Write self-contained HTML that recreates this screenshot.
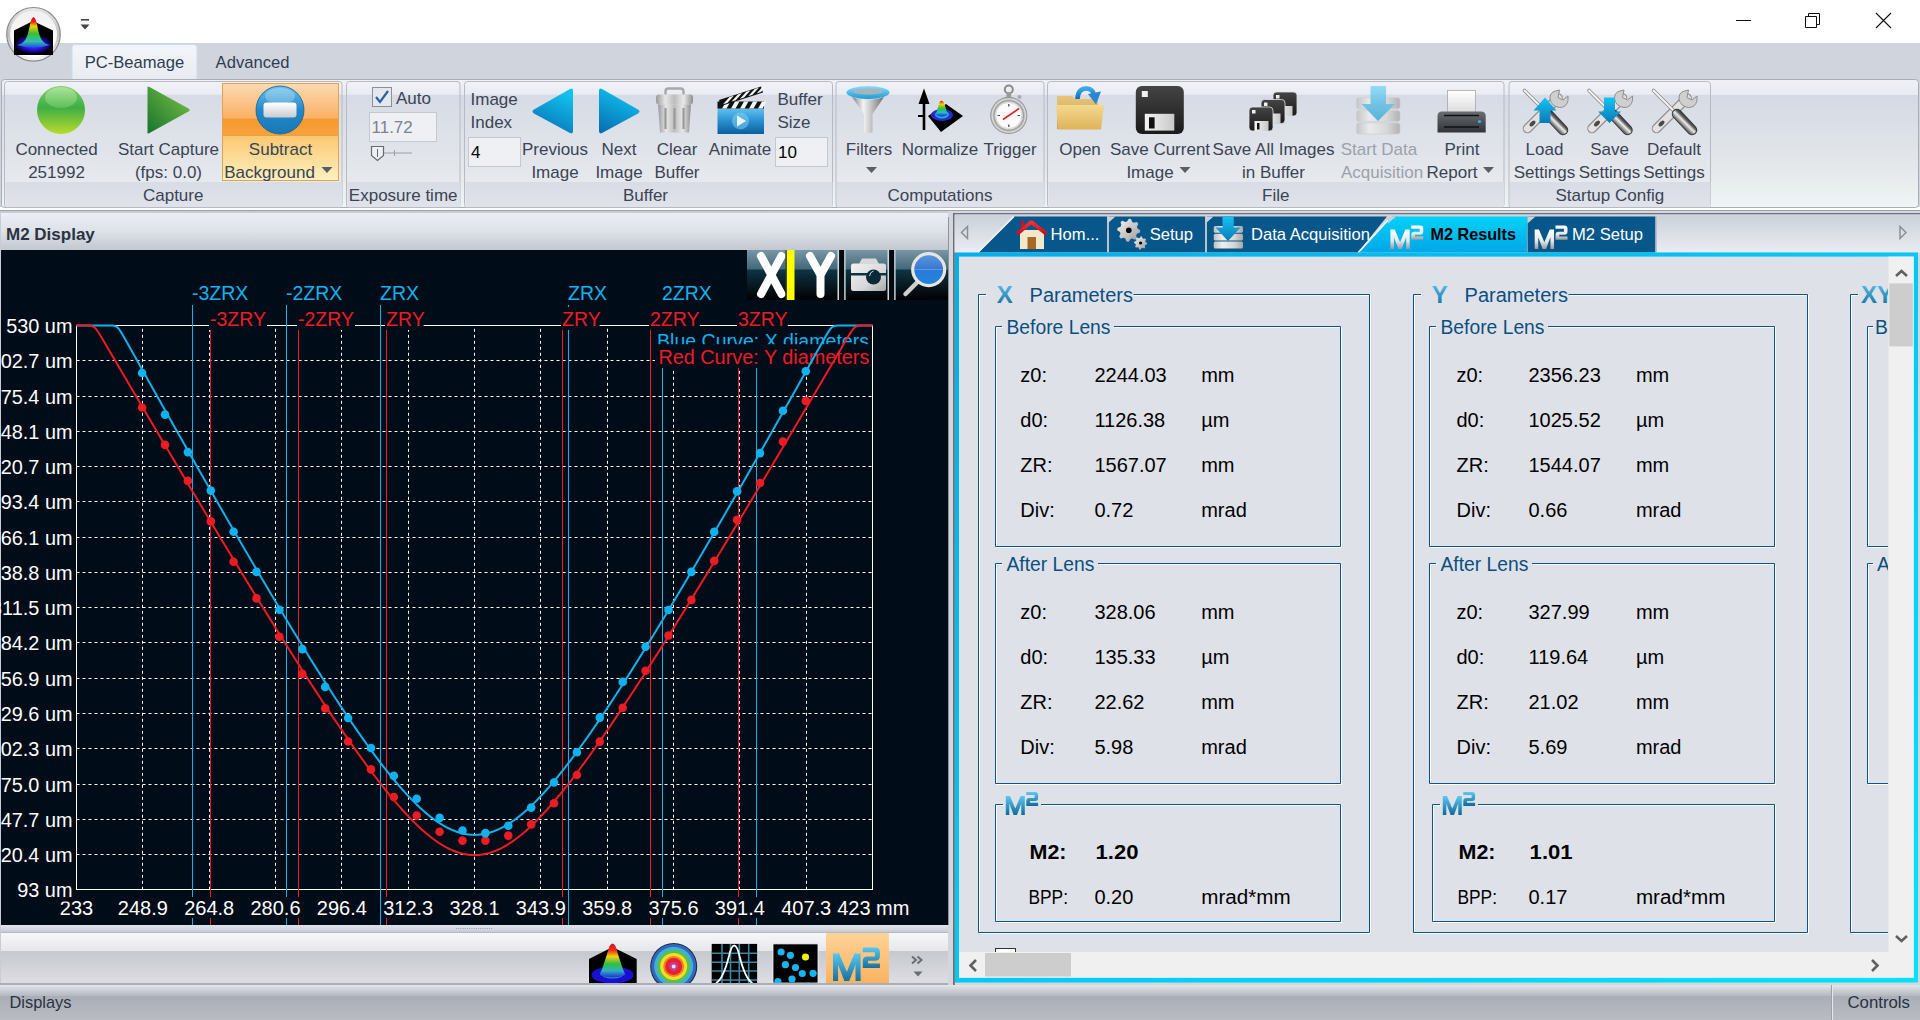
<!DOCTYPE html>
<html><head><meta charset="utf-8"><title>PC-Beamage M2</title>
<style>
html,body{margin:0;padding:0;width:1920px;height:1020px;overflow:hidden;background:#d4d8e0;}
body{position:relative;font-family:"Liberation Sans", sans-serif;}
svg{display:block;font-family:"Liberation Sans", sans-serif;}
</style></head><body>
<svg width="0" height="0" style="position:absolute"><defs><linearGradient id="gTabSel" x1="0" y1="0" x2="0" y2="1"><stop offset="0" stop-color="#f3f6f9"/><stop offset="1" stop-color="#e8ebf1"/></linearGradient><linearGradient id="gRib" x1="0" y1="0" x2="0" y2="1"><stop offset="0" stop-color="#eff1f6"/><stop offset="0.12" stop-color="#e8ebf1"/><stop offset="0.125" stop-color="#d4d9e3"/><stop offset="0.4" stop-color="#dce0e8"/><stop offset="0.72" stop-color="#e5e9eb"/><stop offset="1" stop-color="#eff5f6"/></linearGradient><linearGradient id="gGroup" x1="0" y1="0" x2="0" y2="1"><stop offset="0" stop-color="#f0f2f6"/><stop offset="0.1" stop-color="#e9ecf2"/><stop offset="0.11" stop-color="#d6dbe5"/><stop offset="0.45" stop-color="#dee2e9"/><stop offset="0.8" stop-color="#e6e9ed"/><stop offset="1" stop-color="#eceff1"/></linearGradient><linearGradient id="gGLab" x1="0" y1="0" x2="0" y2="1"><stop offset="0" stop-color="#d8dce5"/><stop offset="1" stop-color="#e0e3ea"/></linearGradient><linearGradient id="gSubUp" x1="0" y1="0" x2="0" y2="1"><stop offset="0" stop-color="#fdd9b2"/><stop offset="0.66" stop-color="#fab164"/><stop offset="0.685" stop-color="#f7982f"/><stop offset="1" stop-color="#f8a33e"/></linearGradient><linearGradient id="gSubLo" x1="0" y1="0" x2="0" y2="1"><stop offset="0" stop-color="#fbc771"/><stop offset="1" stop-color="#fff0bf"/></linearGradient><linearGradient id="gHdr" x1="0" y1="0" x2="0" y2="1"><stop offset="0" stop-color="#ebeef5"/><stop offset="0.5" stop-color="#dde1e8"/><stop offset="1" stop-color="#c3c7cf"/></linearGradient><linearGradient id="gTabStrip" x1="0" y1="0" x2="0" y2="1"><stop offset="0" stop-color="#ccd0d9"/><stop offset="1" stop-color="#e9ecf2"/></linearGradient><linearGradient id="gCyanFrame" x1="0" y1="0" x2="1" y2="1"><stop offset="0" stop-color="#00b0e8"/><stop offset="1" stop-color="#00e2ff"/></linearGradient><linearGradient id="gTabSelC" x1="0" y1="0" x2="0" y2="1"><stop offset="0" stop-color="#00d2f8"/><stop offset="1" stop-color="#00a6e6"/></linearGradient><linearGradient id="gBotBar" x1="0" y1="0" x2="0" y2="1"><stop offset="0" stop-color="#f6f7f9"/><stop offset="0.36" stop-color="#e5e7ea"/><stop offset="0.37" stop-color="#c6c9ce"/><stop offset="1" stop-color="#dcdee2"/></linearGradient><linearGradient id="gStatus" x1="0" y1="0" x2="0" y2="1"><stop offset="0" stop-color="#e3e6ea"/><stop offset="0.3" stop-color="#b5b9c1"/><stop offset="0.33" stop-color="#aaaeb6"/><stop offset="1" stop-color="#b9bcc3"/></linearGradient><linearGradient id="gSplit" x1="0" y1="0" x2="0" y2="1"><stop offset="0" stop-color="#e0e4ed"/><stop offset="0.55" stop-color="#d2d6de"/><stop offset="0.85" stop-color="#c6cad2"/><stop offset="1" stop-color="#a9adb5"/></linearGradient><linearGradient id="gXBar" x1="0" y1="0" x2="0" y2="1"><stop offset="0" stop-color="#86a3b1"/><stop offset="0.42" stop-color="#3e6374"/><stop offset="0.44" stop-color="#0a2d3c"/><stop offset="1" stop-color="#000000"/></linearGradient><linearGradient id="gLetter" x1="0" y1="0" x2="0" y2="1"><stop offset="0" stop-color="#5ec9f2"/><stop offset="1" stop-color="#0f6a98"/></linearGradient><linearGradient id="gBlueTri" x1="0" y1="0" x2="0" y2="1"><stop offset="0" stop-color="#12c0f0"/><stop offset="1" stop-color="#0b6eb0"/></linearGradient><linearGradient id="gGreenTri" x1="1" y1="0" x2="0" y2="1"><stop offset="0" stop-color="#86c84a"/><stop offset="1" stop-color="#1a7a32"/></linearGradient><radialGradient id="gGreenBall" cx="0.5" cy="0.35" r="0.65"><stop offset="0" stop-color="#8fdc73"/><stop offset="0.55" stop-color="#4cb847"/><stop offset="1" stop-color="#b4dc30"/></radialGradient><radialGradient id="gBlueBall" cx="0.5" cy="0.4" r="0.6"><stop offset="0" stop-color="#7cc8ee"/><stop offset="0.6" stop-color="#2a8ccc"/><stop offset="1" stop-color="#0f5e96"/></radialGradient><linearGradient id="iGreenBall" x1="0" y1="0" x2="0" y2="1"><stop offset="0" stop-color="#7fd06a"/><stop offset="0.45" stop-color="#3fae45"/><stop offset="1" stop-color="#b8dc2a"/></linearGradient><linearGradient id="iGreenHi" x1="0" y1="0" x2="0" y2="1"><stop offset="0" stop-color="#b4e6a4"/><stop offset="1" stop-color="#62c25a"/></linearGradient><linearGradient id="iGreenTri" x1="1" y1="0" x2="0" y2="1"><stop offset="0" stop-color="#7ec444"/><stop offset="1" stop-color="#16732f"/></linearGradient><linearGradient id="iBlueBall" x1="0" y1="0" x2="0" y2="1"><stop offset="0" stop-color="#6cc2ee"/><stop offset="0.5" stop-color="#2288c8"/><stop offset="1" stop-color="#1a78b8"/></linearGradient><linearGradient id="iBar" x1="0" y1="0" x2="0" y2="1"><stop offset="0" stop-color="#ffffff"/><stop offset="1" stop-color="#c9ccd0"/></linearGradient><linearGradient id="iTri" x1="0.6" y1="0" x2="0.2" y2="1"><stop offset="0" stop-color="#12c2f2"/><stop offset="1" stop-color="#0670b2"/></linearGradient><linearGradient id="iSilver" x1="0" y1="0" x2="1" y2="0"><stop offset="0" stop-color="#9a9a9a"/><stop offset="0.25" stop-color="#e6e6e6"/><stop offset="0.5" stop-color="#bdbdbd"/><stop offset="0.75" stop-color="#e8e8e8"/><stop offset="1" stop-color="#8e8e8e"/></linearGradient><linearGradient id="iClapBody" x1="0" y1="0" x2="0" y2="1"><stop offset="0" stop-color="#63c3ee"/><stop offset="0.5" stop-color="#2a8fcf"/><stop offset="1" stop-color="#0b5f9e"/></linearGradient><linearGradient id="iCyanRing" x1="0" y1="0" x2="0" y2="1"><stop offset="0" stop-color="#8fdcf8"/><stop offset="1" stop-color="#1a9ad6"/></linearGradient><linearGradient id="iCone" x1="0" y1="0" x2="1" y2="0"><stop offset="0" stop-color="#7a7a7a"/><stop offset="0.35" stop-color="#f4f4f4"/><stop offset="0.6" stop-color="#c4c4c4"/><stop offset="1" stop-color="#6e6e6e"/></linearGradient><radialGradient id="iOrbBase" cx="0.5" cy="0.5" r="0.5"><stop offset="0" stop-color="#3a60ff"/><stop offset="0.55" stop-color="#2a10e0"/><stop offset="1" stop-color="#000010"/></radialGradient><linearGradient id="iOrbRing" x1="0" y1="0" x2="0" y2="1"><stop offset="0" stop-color="#e8e8e8"/><stop offset="0.5" stop-color="#bdbdbd"/><stop offset="1" stop-color="#f8f8f8"/></linearGradient><linearGradient id="iOrbIn" x1="0" y1="0" x2="0" y2="1"><stop offset="0" stop-color="#f0f0f0"/><stop offset="1" stop-color="#ffffff"/></linearGradient><linearGradient id="iRainbow2" x1="0" y1="0" x2="0" y2="1"><stop offset="0" stop-color="#d00020"/><stop offset="0.15" stop-color="#f02010"/><stop offset="0.3" stop-color="#f0d000"/><stop offset="0.55" stop-color="#38c038"/><stop offset="0.8" stop-color="#30c0b0"/><stop offset="1" stop-color="#2050e0"/></linearGradient><linearGradient id="iRainbow" x1="0" y1="0" x2="0" y2="1"><stop offset="0" stop-color="#e01010"/><stop offset="0.22" stop-color="#f0d000"/><stop offset="0.5" stop-color="#30c040"/><stop offset="0.75" stop-color="#20c0d0"/><stop offset="1" stop-color="#2020e0"/></linearGradient><radialGradient id="iWatch" cx="0.5" cy="0.5" r="0.5"><stop offset="0" stop-color="#ffffff"/><stop offset="0.7" stop-color="#f4f4f4"/><stop offset="0.8" stop-color="#9a9a9a"/><stop offset="0.9" stop-color="#e0e0e0"/><stop offset="1" stop-color="#7a7a7a"/></radialGradient><linearGradient id="iFolder" x1="0" y1="0" x2="0" y2="1"><stop offset="0" stop-color="#f3d98f"/><stop offset="1" stop-color="#dfb35a"/></linearGradient><linearGradient id="iFolderBack" x1="0" y1="0" x2="0" y2="1"><stop offset="0" stop-color="#e6c57a"/><stop offset="1" stop-color="#c99c45"/></linearGradient><linearGradient id="iArrowBlue" x1="0" y1="0" x2="0" y2="1"><stop offset="0" stop-color="#3aa8e8"/><stop offset="1" stop-color="#0f6cb8"/></linearGradient><linearGradient id="iFloppy" x1="0" y1="0" x2="0" y2="1"><stop offset="0" stop-color="#444"/><stop offset="1" stop-color="#1a1a1a"/></linearGradient><linearGradient id="iLabel" x1="0" y1="0" x2="1" y2="0"><stop offset="0" stop-color="#f4f4f4"/><stop offset="1" stop-color="#c8c8c8"/></linearGradient><linearGradient id="iDisc" x1="0" y1="0" x2="1" y2="0"><stop offset="0" stop-color="#c0c0c0"/><stop offset="0.3" stop-color="#eeeeee"/><stop offset="0.7" stop-color="#d6d6d6"/><stop offset="1" stop-color="#a8a8a8"/></linearGradient><linearGradient id="iArrowLight" x1="0" y1="0" x2="0" y2="1"><stop offset="0" stop-color="#7dd6f6"/><stop offset="1" stop-color="#3aa6d6"/></linearGradient><linearGradient id="iPrinter" x1="0" y1="0" x2="0" y2="1"><stop offset="0" stop-color="#6a6e72"/><stop offset="1" stop-color="#303438"/></linearGradient><linearGradient id="iPaper" x1="0" y1="0" x2="0" y2="1"><stop offset="0" stop-color="#ffffff"/><stop offset="1" stop-color="#dcdcdc"/></linearGradient><linearGradient id="iCyanArrow" x1="0" y1="0" x2="0" y2="1"><stop offset="0" stop-color="#14c4f4"/><stop offset="1" stop-color="#0a7ab6"/></linearGradient><linearGradient id="iDarkHandle" x1="29.8" y1="38.7" x2="38.2" y2="30.3" gradientUnits="userSpaceOnUse"><stop offset="0" stop-color="#2a2a2a"/><stop offset="0.3" stop-color="#a0a0a0"/><stop offset="0.5" stop-color="#eeeeee"/><stop offset="0.72" stop-color="#606060"/><stop offset="1" stop-color="#1e1e1e"/></linearGradient><linearGradient id="tbBg" x1="0" y1="0" x2="0" y2="1"><stop offset="0" stop-color="#7896a6"/><stop offset="0.38" stop-color="#436878"/><stop offset="0.4" stop-color="#0e3444"/><stop offset="1" stop-color="#000000"/></linearGradient><linearGradient id="tbCam" x1="0" y1="0" x2="1" y2="1"><stop offset="0" stop-color="#f2f2f2"/><stop offset="0.6" stop-color="#d8d8d8"/><stop offset="1" stop-color="#a8a8a8"/></linearGradient><linearGradient id="tbGlass" x1="0" y1="0" x2="0" y2="1"><stop offset="0" stop-color="#5a9ae0"/><stop offset="0.48" stop-color="#3a78d0"/><stop offset="0.52" stop-color="#2a7ad8"/><stop offset="1" stop-color="#1a88e0"/></linearGradient><linearGradient id="m2Blue" x1="0" y1="0" x2="0" y2="1"><stop offset="0" stop-color="#55c8f2"/><stop offset="1" stop-color="#16709e"/></linearGradient><linearGradient id="m2Silver" x1="0" y1="0" x2="0" y2="1"><stop offset="0" stop-color="#ffffff"/><stop offset="0.6" stop-color="#e6e6e6"/><stop offset="1" stop-color="#9a9a9a"/></linearGradient><linearGradient id="m2Orange" x1="0" y1="0" x2="0" y2="1"><stop offset="0" stop-color="#fdd398"/><stop offset="1" stop-color="#fbb261"/></linearGradient><linearGradient id="houseRoof" x1="0" y1="0" x2="0" y2="1"><stop offset="0" stop-color="#ff3030"/><stop offset="1" stop-color="#c80c1c"/></linearGradient><linearGradient id="gearG" x1="0" y1="0" x2="1" y2="1"><stop offset="0" stop-color="#f4f4f4"/><stop offset="1" stop-color="#9a9a9a"/></linearGradient><linearGradient id="conePeak" x1="0" y1="0" x2="0" y2="1"><stop offset="0" stop-color="#d01040"/><stop offset="0.2" stop-color="#f03010"/><stop offset="0.38" stop-color="#f0d010"/><stop offset="0.6" stop-color="#30c040"/><stop offset="0.8" stop-color="#30b0c0"/><stop offset="1" stop-color="#2030d0"/></linearGradient></defs></svg>
<div style="position:absolute;left:0px;top:0px;width:1920px;height:43px;overflow:hidden"><svg width="1920" height="43" viewBox="0 0 1920 43"><rect x="0" y="0" width="1920" height="43" fill="#fff"/><rect x="81" y="19" width="8" height="1.6" fill="#444"/><path d="M80.5 24.5h9l-4.5 5z" fill="#444"/><path d="M1736 20.5h15" stroke="#111" stroke-width="1"/><path d="M1805.5 16.5h11v11h-11z M1808.5 16.5v-3h11v11h-3" fill="none" stroke="#111" stroke-width="1"/><path d="M1876 13l15 15M1891 13l-15 15" stroke="#111" stroke-width="1.1"/></svg></div>
<div style="position:absolute;left:0px;top:43px;width:1920px;height:167px;overflow:hidden"><svg width="1920" height="167" viewBox="0 43 1920 167"><rect x="0" y="43" width="1920" height="167" fill="#d0d4dd"/><path d="M72 79V47.5q0-3 3-3h119q3 0 3 3V79" fill="url(#gTabSel)" stroke="#c8dcea" stroke-width="1"/><text x="134.5" y="67.5" font-size="16.6" fill="#2f3d52" text-anchor="middle">PC-Beamage</text><text x="252.5" y="67.5" font-size="16.6" fill="#2f3d52" text-anchor="middle">Advanced</text><rect x="0" y="207" width="1920" height="3" fill="#ffffff"/><rect x="1.5" y="79.5" width="1917" height="128" rx="3" fill="url(#gRib)" stroke="#a9adb5"/><rect x="4.5" y="81.5" width="337.5" height="126" rx="3" fill="url(#gGroup)" stroke="#b6bac4"/><rect x="5.5" y="182" width="336.5" height="25" fill="url(#gGLab)"/><text x="173.2" y="200.5" font-size="17" fill="#3a4454" text-anchor="middle">Capture</text><rect x="346.5" y="81.5" width="113.5" height="126" rx="3" fill="url(#gGroup)" stroke="#b6bac4"/><rect x="347.5" y="182" width="112.5" height="25" fill="url(#gGLab)"/><text x="403.2" y="200.5" font-size="17" fill="#3a4454" text-anchor="middle">Exposure time</text><rect x="464.5" y="81.5" width="368.0" height="126" rx="3" fill="url(#gGroup)" stroke="#b6bac4"/><rect x="465.5" y="182" width="367.0" height="25" fill="url(#gGLab)"/><text x="645.5" y="200.5" font-size="17" fill="#3a4454" text-anchor="middle">Buffer</text><rect x="836.0" y="81.5" width="208.0" height="126" rx="3" fill="url(#gGroup)" stroke="#b6bac4"/><rect x="837.0" y="182" width="207.0" height="25" fill="url(#gGLab)"/><text x="940.0" y="200.5" font-size="17" fill="#3a4454" text-anchor="middle">Computations</text><rect x="1047.5" y="81.5" width="456.5" height="126" rx="3" fill="url(#gGroup)" stroke="#b6bac4"/><rect x="1048.5" y="182" width="455.5" height="25" fill="url(#gGLab)"/><text x="1275.8" y="200.5" font-size="17" fill="#3a4454" text-anchor="middle">File</text><rect x="1509.0" y="81.5" width="201.5" height="126" rx="3" fill="url(#gGroup)" stroke="#b6bac4"/><rect x="1510.0" y="182" width="200.5" height="25" fill="url(#gGLab)"/><text x="1609.8" y="200.5" font-size="17" fill="#3a4454" text-anchor="middle">Startup Config</text><rect x="222.5" y="83.5" width="116" height="97" fill="#f0a445" stroke="#e9a04c"/><rect x="223" y="84" width="115" height="51.5" fill="url(#gSubUp)"/><rect x="223" y="135.5" width="115" height="44.5" fill="url(#gSubLo)"/><path d="M223 135.5h115" stroke="#e8a040" stroke-width="1"/><text x="56.5" y="155.0" font-size="17" fill="#3a4454" text-anchor="middle">Connected</text><text x="56.5" y="178.0" font-size="17" fill="#3a4454" text-anchor="middle">251992</text><text x="168.5" y="155.0" font-size="17" fill="#3a4454" text-anchor="middle">Start Capture</text><text x="168.5" y="178.0" font-size="17" fill="#3a4454" text-anchor="middle">(fps: 0.0)</text><text x="280.5" y="155.0" font-size="17" fill="#3a4454" text-anchor="middle">Subtract</text><text x="269.5" y="178.0" font-size="17" fill="#3a4454" text-anchor="middle">Background</text><path d="M321.5 167.0h11l-5.5 6z" fill="#5a5e66"/><rect x="372.5" y="87.5" width="19" height="19" fill="#e4e7ec" stroke="#8a8f98"/><path d="M376 97l4 5 8-11" fill="none" stroke="#2a5fa8" stroke-width="2.2"/><text x="396.0" y="104.0" font-size="17" fill="#3a4454">Auto</text><rect x="369.5" y="112.5" width="67" height="29" fill="#eef0f3" stroke="#c4c8cf"/><text x="371.5" y="133.0" font-size="17" fill="#7c8290">11.72</text><path d="M378 153h34M394.5 150v6" stroke="#9aa0a8" stroke-width="1"/><path d="M371.5 146.5h12v9l-6 5l-6-5z" fill="#eef0f3" stroke="#666b73" stroke-width="1.2"/><path d="M377.5 149v8" stroke="#666b73" stroke-width="1"/><text x="470.5" y="105.0" font-size="17" fill="#3a4454">Image</text><text x="470.5" y="127.5" font-size="17" fill="#3a4454">Index</text><rect x="468.5" y="137.5" width="52" height="29" fill="#eef0f3" stroke="#c4c8cf"/><text x="471.0" y="158.0" font-size="17" fill="#000">4</text><text x="555.0" y="155.0" font-size="17" fill="#3a4454" text-anchor="middle">Previous</text><text x="555.0" y="178.0" font-size="17" fill="#3a4454" text-anchor="middle">Image</text><text x="619.0" y="155.0" font-size="17" fill="#3a4454" text-anchor="middle">Next</text><text x="619.0" y="178.0" font-size="17" fill="#3a4454" text-anchor="middle">Image</text><text x="677.0" y="155.0" font-size="17" fill="#3a4454" text-anchor="middle">Clear</text><text x="677.0" y="178.0" font-size="17" fill="#3a4454" text-anchor="middle">Buffer</text><text x="740.0" y="155.0" font-size="17" fill="#3a4454" text-anchor="middle">Animate</text><text x="777.5" y="105.0" font-size="17" fill="#3a4454">Buffer</text><text x="777.5" y="127.5" font-size="17" fill="#3a4454">Size</text><rect x="775.5" y="137.5" width="52" height="29" fill="#eef0f3" stroke="#c4c8cf"/><text x="778.0" y="158.0" font-size="17" fill="#000">10</text><text x="869.0" y="155.0" font-size="17" fill="#3a4454" text-anchor="middle">Filters</text><path d="M866.0 167.0h11l-5.5 6z" fill="#5a5e66"/><text x="940.0" y="155.0" font-size="17" fill="#3a4454" text-anchor="middle">Normalize</text><text x="1010.0" y="155.0" font-size="17" fill="#3a4454" text-anchor="middle">Trigger</text><text x="1080.0" y="155.0" font-size="17" fill="#3a4454" text-anchor="middle">Open</text><text x="1160.0" y="155.0" font-size="17" fill="#3a4454" text-anchor="middle">Save Current</text><text x="1150.0" y="178.0" font-size="17" fill="#3a4454" text-anchor="middle">Image</text><path d="M1179.5 167.0h11l-5.5 6z" fill="#5a5e66"/><text x="1273.5" y="155.0" font-size="17" fill="#3a4454" text-anchor="middle">Save All Images</text><text x="1273.5" y="178.0" font-size="17" fill="#3a4454" text-anchor="middle">in Buffer</text><text x="1379.0" y="155.0" font-size="17" fill="#9ba1ab" text-anchor="middle">Start Data</text><text x="1382.0" y="178.0" font-size="17" fill="#9ba1ab" text-anchor="middle">Acquisition</text><text x="1462.0" y="155.0" font-size="17" fill="#3a4454" text-anchor="middle">Print</text><text x="1452.0" y="178.0" font-size="17" fill="#3a4454" text-anchor="middle">Report</text><path d="M1483.0 167.0h11l-5.5 6z" fill="#5a5e66"/><text x="1544.5" y="155.0" font-size="17" fill="#3a4454" text-anchor="middle">Load</text><text x="1544.5" y="178.0" font-size="17" fill="#3a4454" text-anchor="middle">Settings</text><text x="1609.5" y="155.0" font-size="17" fill="#3a4454" text-anchor="middle">Save</text><text x="1609.5" y="178.0" font-size="17" fill="#3a4454" text-anchor="middle">Settings</text><text x="1674.0" y="155.0" font-size="17" fill="#3a4454" text-anchor="middle">Default</text><text x="1674.0" y="178.0" font-size="17" fill="#3a4454" text-anchor="middle">Settings</text><circle cx="61" cy="110" r="24" fill="url(#iGreenBall)"/><ellipse cx="61" cy="97.5" rx="16" ry="10.5" fill="url(#iGreenHi)" opacity="0.85"/><path d="M147.5 88Q147 85.5 149.5 87L188.5 108.5Q191 110 188.5 111.5L149.5 133Q147 134.5 147.5 132z" fill="url(#iGreenTri)"/><circle cx="280" cy="110" r="24" fill="url(#iBlueBall)" stroke="#0f5d92" stroke-width="0.8"/><ellipse cx="280" cy="96" rx="15" ry="8" fill="#ffffff" opacity="0.25"/><rect x="263.5" y="102.5" width="33" height="15" rx="3" fill="url(#iBar)"/><path d="M534 109.5L570 89Q573 87.5 573 91V131Q573 134.5 570 133L534 113.5Q531 111.5 534 109.5z" fill="url(#iTri)"/><path d="M638 109.5L602 89Q599 87.5 599 91V131Q599 134.5 602 133L638 113.5Q641 111.5 638 109.5z" fill="url(#iTri)"/><path d="M665.5 95V91.5Q665.5 88.5 668.5 88.5H680.5Q683.5 88.5 683.5 91.5V95" fill="none" stroke="#a8a8a8" stroke-width="2.4"/><rect x="656" y="94.5" width="37" height="10" rx="3" fill="url(#iSilver)"/><path d="M658 104.5H691L689 132.5H660z" fill="url(#iSilver)"/><path d="M665.5 108V129M674.5 108V129M683.5 108V129" stroke="#9a9a9a" stroke-width="2.2"/><rect x="717.5" y="108" width="46.5" height="26" fill="url(#iClapBody)"/><rect x="717.5" y="101.5" width="46.5" height="7" fill="#111"/><path d="M722.0 108.5l4-7h4.5l-4 7z" fill="#f4f4f4"/><path d="M731.0 108.5l4-7h4.5l-4 7z" fill="#f4f4f4"/><path d="M740.0 108.5l4-7h4.5l-4 7z" fill="#f4f4f4"/><path d="M749.0 108.5l4-7h4.5l-4 7z" fill="#f4f4f4"/><path d="M758.0 108.5l4-7h4.5l-4 7z" fill="#f4f4f4"/><path d="M719 100L761 86.5L763 92.5L721 106z" fill="#111"/><path d="M723.0 104.3l6.5-7.2l4.3-1.4l-6.5 7.2z" fill="#f4f4f4"/><path d="M731.4 101.6l6.5-7.2l4.3-1.4l-6.5 7.2z" fill="#f4f4f4"/><path d="M739.8 98.9l6.5-7.2l4.3-1.4l-6.5 7.2z" fill="#f4f4f4"/><path d="M748.2 96.2l6.5-7.2l4.3-1.4l-6.5 7.2z" fill="#f4f4f4"/><path d="M756.6 93.5l6.5-7.2l4.3-1.4l-6.5 7.2z" fill="#f4f4f4"/><circle cx="740.5" cy="121" r="8.5" fill="#7fd0f2" opacity="0.55"/><path d="M737 115.5v11l9-5.5z" fill="#e8f8ff"/><path d="M852 97Q868 103 884 97L872.5 114V132Q868 134.5 864 132V114z" fill="url(#iCone)"/><ellipse cx="868" cy="92.5" rx="21.5" ry="6.5" fill="url(#iCyanRing)"/><ellipse cx="868" cy="91.5" rx="15" ry="3" fill="#a8b4bc"/><path d="M928 116L946 104L963 116L941 132z" fill="#000"/><ellipse cx="942" cy="115" rx="11" ry="6" fill="#2a2ad0"/><ellipse cx="942" cy="114.5" rx="7" ry="4" fill="#20b0d0"/><path d="M936 115Q938.5 104 940 101.5Q941.5 100 943 101.5Q945 104 947.5 115Q942 118 936 115z" fill="url(#iRainbow)"/><path d="M924 130V99" stroke="#000" stroke-width="2.6"/><path d="M918.5 104L924 88.5L929.5 104z" fill="#000"/><path d="M918 116h5" stroke="#000" stroke-width="2"/><circle cx="1008.8" cy="89.5" r="4" fill="none" stroke="#8a8a8a" stroke-width="2"/><rect x="1006.5" y="92.5" width="4.6" height="5" fill="#9a9a9a"/><circle cx="1019.5" cy="97" r="2" fill="#aaa"/><circle cx="1008.8" cy="115.5" r="18.5" fill="url(#iWatch)"/><circle cx="1008.8" cy="115.5" r="13" fill="#fbfbfb" stroke="#cfcfcf" stroke-width="0.8"/><path d="M1003 119.5L1019 108.5" stroke="#e02020" stroke-width="1.6"/><path d="M1008.8 104v2.5M1008.8 124.5v2.5M997.5 115.5h2.5M1017.5 115.5h2.5" stroke="#444" stroke-width="1.2"/><path d="M1057 96H1072L1075 99H1098V129H1057z" fill="url(#iFolderBack)"/><path d="M1056 105H1104L1101 129.5H1058z" fill="url(#iFolder)"/><path d="M1077.5 99Q1078 88 1087 88.5Q1093 89 1094 95" fill="none" stroke="url(#iArrowBlue)" stroke-width="4.6"/><path d="M1088 94L1101 91.5L1096 104.5z" fill="#2a86d0"/><g transform="translate(1135.8 86.0) scale(1.0000)"><rect x="0" y="0" width="48" height="48" rx="6" fill="url(#iFloppy)"/><rect x="6" y="5" width="6" height="6" fill="#f0f0f0"/><rect x="9" y="27.8" width="29.5" height="16.8" fill="url(#iLabel)"/><rect x="13.2" y="31.3" width="5.6" height="11.2" fill="#111"/></g><g transform="translate(1273.0 92.0)"><rect x="0" y="0" width="24" height="24" rx="3.5" fill="url(#iFloppy)" stroke="#dfe2e9" stroke-width="0.8"/><rect x="3" y="3" width="3.5" height="3.5" fill="#f0f0f0"/><rect x="5.5" y="14" width="14" height="10" fill="url(#iLabel)"/><rect x="8" y="16" width="2.5" height="6.5" fill="#111"/></g><g transform="translate(1261.0 99.5)"><rect x="0" y="0" width="24" height="24" rx="3.5" fill="url(#iFloppy)" stroke="#dfe2e9" stroke-width="0.8"/><rect x="3" y="3" width="3.5" height="3.5" fill="#f0f0f0"/><rect x="5.5" y="14" width="14" height="10" fill="url(#iLabel)"/><rect x="8" y="16" width="2.5" height="6.5" fill="#111"/></g><g transform="translate(1249.0 107.0)"><rect x="0" y="0" width="24" height="24" rx="3.5" fill="url(#iFloppy)" stroke="#dfe2e9" stroke-width="0.8"/><rect x="3" y="3" width="3.5" height="3.5" fill="#f0f0f0"/><rect x="5.5" y="14" width="14" height="10" fill="url(#iLabel)"/><rect x="8" y="16" width="2.5" height="6.5" fill="#111"/></g><g opacity="0.8"><rect x="1356.5" y="97.8" width="43.5" height="11" rx="2.5" fill="url(#iDisc)" stroke="#c8c8c8" stroke-width="0.6"/><rect x="1356.5" y="110.4" width="43.5" height="11" rx="2.5" fill="url(#iDisc)" stroke="#c8c8c8" stroke-width="0.6"/><rect x="1356.5" y="123.0" width="43.5" height="11" rx="2.5" fill="url(#iDisc)" stroke="#c8c8c8" stroke-width="0.6"/><path d="M1370.5 86H1386V104H1395L1378 121L1361.5 104H1370.5z" fill="url(#iArrowLight)"/></g><rect x="1447.5" y="90.5" width="28" height="22" fill="url(#iPaper)" stroke="#a8a8a8" stroke-width="0.8"/><path d="M1437.5 132.5V116Q1437.5 111.5 1442 111.5H1481Q1485.7 111.5 1485.7 116V132.5z" fill="url(#iPrinter)"/><path d="M1444 115.5H1479M1444 127H1479" stroke="#111" stroke-width="1.6"/><circle cx="1479.5" cy="121.5" r="1.6" fill="#3ab0f0"/><g transform="translate(1521.5 87.5)"><path d="M36.5 10.5L6 41" stroke="#8e8e8e" stroke-width="9.6" stroke-linecap="round"/><path d="M36.5 10.5L6 41" stroke="#e2e2e2" stroke-width="7.4" stroke-linecap="round"/><path d="M34 3.5Q28 5 28.5 11.5Q30 19 38 20Q45 20 46.5 13L46.5 8.5L41.5 12.5L36.5 10L38 2.5z" fill="#cfcfcf" stroke="#8e8e8e" stroke-width="1"/><ellipse cx="11" cy="36" rx="3.6" ry="2" transform="rotate(-45 11 36)" fill="#4a4a4a"/><path d="M3 3L25 25" stroke="#8e8e8e" stroke-width="3.6" stroke-linecap="round"/><path d="M3 3L25 25" stroke="#f4f4f4" stroke-width="1.8" stroke-linecap="round"/><path d="M26.5 26.5L41.5 42.5" stroke="#3a3a3a" stroke-width="10.5" stroke-linecap="round"/><path d="M26.5 26.5L41.5 42.5" stroke="url(#iDarkHandle)" stroke-width="8.5" stroke-linecap="round"/></g><g transform="translate(1521.5 87.5)"><path d="M23.5 10L35 23H29V35.5H18V23H12z" fill="url(#iCyanArrow)"/></g><g transform="translate(1586.0 87.5)"><path d="M36.5 10.5L6 41" stroke="#8e8e8e" stroke-width="9.6" stroke-linecap="round"/><path d="M36.5 10.5L6 41" stroke="#e2e2e2" stroke-width="7.4" stroke-linecap="round"/><path d="M34 3.5Q28 5 28.5 11.5Q30 19 38 20Q45 20 46.5 13L46.5 8.5L41.5 12.5L36.5 10L38 2.5z" fill="#cfcfcf" stroke="#8e8e8e" stroke-width="1"/><ellipse cx="11" cy="36" rx="3.6" ry="2" transform="rotate(-45 11 36)" fill="#4a4a4a"/><path d="M3 3L25 25" stroke="#8e8e8e" stroke-width="3.6" stroke-linecap="round"/><path d="M3 3L25 25" stroke="#f4f4f4" stroke-width="1.8" stroke-linecap="round"/><path d="M26.5 26.5L41.5 42.5" stroke="#3a3a3a" stroke-width="10.5" stroke-linecap="round"/><path d="M26.5 26.5L41.5 42.5" stroke="url(#iDarkHandle)" stroke-width="8.5" stroke-linecap="round"/></g><g transform="translate(1586.0 87.5)"><path d="M18 10H29V24H35L23.5 35.5L12 24H18z" fill="url(#iCyanArrow)"/></g><g transform="translate(1650.5 87.5)"><path d="M36.5 10.5L6 41" stroke="#8e8e8e" stroke-width="9.6" stroke-linecap="round"/><path d="M36.5 10.5L6 41" stroke="#e2e2e2" stroke-width="7.4" stroke-linecap="round"/><path d="M34 3.5Q28 5 28.5 11.5Q30 19 38 20Q45 20 46.5 13L46.5 8.5L41.5 12.5L36.5 10L38 2.5z" fill="#cfcfcf" stroke="#8e8e8e" stroke-width="1"/><ellipse cx="11" cy="36" rx="3.6" ry="2" transform="rotate(-45 11 36)" fill="#4a4a4a"/><path d="M3 3L25 25" stroke="#8e8e8e" stroke-width="3.6" stroke-linecap="round"/><path d="M3 3L25 25" stroke="#f4f4f4" stroke-width="1.8" stroke-linecap="round"/><path d="M26.5 26.5L41.5 42.5" stroke="#3a3a3a" stroke-width="10.5" stroke-linecap="round"/><path d="M26.5 26.5L41.5 42.5" stroke="url(#iDarkHandle)" stroke-width="8.5" stroke-linecap="round"/></g></svg></div>
<div style="position:absolute;left:0px;top:210px;width:948px;height:775px;overflow:hidden"><svg width="948" height="775" viewBox="0 210 948 775"><rect x="0" y="210" width="948" height="775" fill="#c9ccd3"/><rect x="0" y="210" width="948" height="1" fill="#9da1a9"/><rect x="1" y="213" width="947" height="37" fill="url(#gHdr)"/><text x="6.0" y="239.6" font-size="17" fill="#2b3340" font-weight="bold">M2 Display</text><rect x="1" y="250" width="947" height="675" fill="#010c19"/>
<path d="M76.5 360.5H872.5M76.5 396.5H872.5M76.5 431.5H872.5M76.5 466.5H872.5M76.5 501.5H872.5M76.5 537.5H872.5M76.5 572.5H872.5M76.5 607.5H872.5M76.5 642.5H872.5M76.5 678.5H872.5M76.5 713.5H872.5M76.5 748.5H872.5M76.5 784.5H872.5M76.5 819.5H872.5M76.5 854.5H872.5M142.5 328.8V889.5M209.5 328.8V889.5M275.5 328.8V889.5M341.5 328.8V889.5M408.5 328.8V889.5M474.5 328.8V889.5M540.5 328.8V889.5M607.5 328.8V889.5M673.5 328.8V889.5M739.5 328.8V889.5M806.5 328.8V889.5" stroke="#fff" stroke-width="1" stroke-dasharray="3 3" fill="none"/>
<rect x="76.5" y="325.5" width="796" height="564" fill="none" stroke="#fff" stroke-width="1"/>
<path d="M192.5 305V925" stroke="#0fb2ef" stroke-width="1"/>
<path d="M286.5 305V925" stroke="#0fb2ef" stroke-width="1"/>
<path d="M380.5 305V925" stroke="#0fb2ef" stroke-width="1"/>
<path d="M568.5 305V925" stroke="#0fb2ef" stroke-width="1"/>
<path d="M662.5 368V925" stroke="#0fb2ef" stroke-width="1"/>
<path d="M756.5 368V925" stroke="#0fb2ef" stroke-width="1"/>
<path d="M210.5 330V925" stroke="#ec1c24" stroke-width="1"/>
<path d="M298.5 330V925" stroke="#ec1c24" stroke-width="1"/>
<path d="M386.5 330V925" stroke="#ec1c24" stroke-width="1"/>
<path d="M562.5 330V925" stroke="#ec1c24" stroke-width="1"/>
<path d="M650.5 330V925" stroke="#ec1c24" stroke-width="1"/>
<path d="M738.5 368V925" stroke="#ec1c24" stroke-width="1"/>
<rect x="184.6" y="897" width="49.0" height="21" fill="#010c19"/>
<rect x="251.0" y="897" width="49.0" height="21" fill="#010c19"/>
<rect x="317.3" y="897" width="49.0" height="21" fill="#010c19"/>
<rect x="383.6" y="897" width="49.0" height="21" fill="#010c19"/>
<rect x="450.0" y="897" width="49.0" height="21" fill="#010c19"/>
<rect x="516.3" y="897" width="49.0" height="21" fill="#010c19"/>
<rect x="582.6" y="897" width="49.0" height="21" fill="#010c19"/>
<rect x="649.0" y="897" width="49.0" height="21" fill="#010c19"/>
<rect x="715.3" y="897" width="49.0" height="21" fill="#010c19"/>
<text x="76.5" y="914.7" text-anchor="middle" font-size="20" fill="#fff">233</text>
<text x="142.8" y="914.7" text-anchor="middle" font-size="20" fill="#fff">248.9</text>
<text x="209.2" y="914.7" text-anchor="middle" font-size="20" fill="#fff">264.8</text>
<text x="275.5" y="914.7" text-anchor="middle" font-size="20" fill="#fff">280.6</text>
<text x="341.8" y="914.7" text-anchor="middle" font-size="20" fill="#fff">296.4</text>
<text x="408.2" y="914.7" text-anchor="middle" font-size="20" fill="#fff">312.3</text>
<text x="474.5" y="914.7" text-anchor="middle" font-size="20" fill="#fff">328.1</text>
<text x="540.8" y="914.7" text-anchor="middle" font-size="20" fill="#fff">343.9</text>
<text x="607.2" y="914.7" text-anchor="middle" font-size="20" fill="#fff">359.8</text>
<text x="673.5" y="914.7" text-anchor="middle" font-size="20" fill="#fff">375.6</text>
<text x="739.8" y="914.7" text-anchor="middle" font-size="20" fill="#fff">391.4</text>
<text x="806.2" y="914.7" text-anchor="middle" font-size="20" fill="#fff">407.3</text>
<text x="873.3" y="914.7" text-anchor="middle" font-size="20" fill="#fff">423 mm</text>
<text transform="translate(72.5 332.9) scale(1.02 1.07)" x="0" y="0" text-anchor="end" font-size="19.5" fill="#fff">530 um</text>
<text transform="translate(72.5 367.9) scale(1.02 1.07)" x="0" y="0" text-anchor="end" font-size="19.5" fill="#fff">502.7 um</text>
<text transform="translate(72.5 403.9) scale(1.02 1.07)" x="0" y="0" text-anchor="end" font-size="19.5" fill="#fff">475.4 um</text>
<text transform="translate(72.5 438.9) scale(1.02 1.07)" x="0" y="0" text-anchor="end" font-size="19.5" fill="#fff">448.1 um</text>
<text transform="translate(72.5 473.9) scale(1.02 1.07)" x="0" y="0" text-anchor="end" font-size="19.5" fill="#fff">420.7 um</text>
<text transform="translate(72.5 508.9) scale(1.02 1.07)" x="0" y="0" text-anchor="end" font-size="19.5" fill="#fff">393.4 um</text>
<text transform="translate(72.5 544.9) scale(1.02 1.07)" x="0" y="0" text-anchor="end" font-size="19.5" fill="#fff">366.1 um</text>
<text transform="translate(72.5 579.9) scale(1.02 1.07)" x="0" y="0" text-anchor="end" font-size="19.5" fill="#fff">338.8 um</text>
<text transform="translate(72.5 614.9) scale(1.02 1.07)" x="0" y="0" text-anchor="end" font-size="19.5" fill="#fff">311.5 um</text>
<text transform="translate(72.5 649.9) scale(1.02 1.07)" x="0" y="0" text-anchor="end" font-size="19.5" fill="#fff">284.2 um</text>
<text transform="translate(72.5 685.9) scale(1.02 1.07)" x="0" y="0" text-anchor="end" font-size="19.5" fill="#fff">256.9 um</text>
<text transform="translate(72.5 720.9) scale(1.02 1.07)" x="0" y="0" text-anchor="end" font-size="19.5" fill="#fff">229.6 um</text>
<text transform="translate(72.5 755.9) scale(1.02 1.07)" x="0" y="0" text-anchor="end" font-size="19.5" fill="#fff">202.3 um</text>
<text transform="translate(72.5 791.9) scale(1.02 1.07)" x="0" y="0" text-anchor="end" font-size="19.5" fill="#fff">175.0 um</text>
<text transform="translate(72.5 826.9) scale(1.02 1.07)" x="0" y="0" text-anchor="end" font-size="19.5" fill="#fff">147.7 um</text>
<text transform="translate(72.5 861.9) scale(1.02 1.07)" x="0" y="0" text-anchor="end" font-size="19.5" fill="#fff">120.4 um</text>
<rect x="8" y="882" width="66" height="19.5" fill="#010c19"/>
<text transform="translate(72.5 896.9) scale(1.02 1.07)" x="0" y="0" text-anchor="end" font-size="19.5" fill="#fff">93 um</text>
<rect x="191.5" y="283" width="53.0" height="22" fill="#010c19"/>
<text x="192.0" y="300.4" font-size="19.5" fill="#0fb2ef">-3ZRX</text>
<rect x="285.5" y="283" width="53.0" height="22" fill="#010c19"/>
<text x="286.0" y="300.4" font-size="19.5" fill="#0fb2ef">-2ZRX</text>
<rect x="379.5" y="283" width="36.0" height="22" fill="#010c19"/>
<text x="380.0" y="300.4" font-size="19.5" fill="#0fb2ef">ZRX</text>
<rect x="567.5" y="283" width="36.0" height="22" fill="#010c19"/>
<text x="568.0" y="300.4" font-size="19.5" fill="#0fb2ef">ZRX</text>
<rect x="661.5" y="283" width="47.0" height="22" fill="#010c19"/>
<text x="662.0" y="300.4" font-size="19.5" fill="#0fb2ef">2ZRX</text>
<rect x="755.5" y="283" width="47.0" height="22" fill="#010c19"/>
<text x="756.0" y="300.4" font-size="19.5" fill="#0fb2ef">3ZRX</text>
<rect x="209.0" y="307" width="58.0" height="23" fill="#010c19"/>
<text x="210.0" y="325.6" font-size="19.5" fill="#ec1c24">-3ZRY</text>
<rect x="297.0" y="307" width="58.0" height="23" fill="#010c19"/>
<text x="298.0" y="325.6" font-size="19.5" fill="#ec1c24">-2ZRY</text>
<rect x="385.0" y="307" width="38.6" height="23" fill="#010c19"/>
<text x="386.0" y="325.6" font-size="19.5" fill="#ec1c24">ZRY</text>
<rect x="561.0" y="307" width="38.6" height="23" fill="#010c19"/>
<text x="562.0" y="325.6" font-size="19.5" fill="#ec1c24">ZRY</text>
<rect x="649.0" y="307" width="50.8" height="23" fill="#010c19"/>
<text x="650.0" y="325.6" font-size="19.5" fill="#ec1c24">2ZRY</text>
<rect x="737.0" y="307" width="50.8" height="23" fill="#010c19"/>
<text x="738.0" y="325.6" font-size="19.5" fill="#ec1c24">3ZRY</text>
<rect x="653" y="328" width="219" height="16.4" fill="#010c19"/>
<svg x="0" y="0" width="948" height="344.4" overflow="hidden"><text x="657" y="347.5" font-size="19.5" fill="#0fb2ef" textLength="212" lengthAdjust="spacingAndGlyphs">Blue Curve: X diameters</text></svg>
<rect x="655" y="344.4" width="217" height="23.6" fill="#010c19"/>
<text x="658.4" y="363.8" font-size="19.5" fill="#ec1c24" textLength="211" lengthAdjust="spacingAndGlyphs">Red Curve: Y diameters</text>
<polyline points="76.5,325.5 77.0,325.5 77.5,325.5 78.0,325.5 78.5,325.5 79.0,325.5 79.5,325.5 80.0,325.5 80.5,325.5 81.0,325.5 81.5,325.5 82.0,325.5 82.5,325.5 83.0,325.5 83.5,325.5 84.0,325.5 84.5,325.5 85.0,325.5 85.5,325.5 86.0,325.5 86.5,325.5 87.0,325.5 87.5,325.5 88.0,325.5 88.5,325.5 89.0,325.5 89.5,325.5 90.0,325.5 90.5,325.5 91.0,325.5 91.5,325.5 92.0,325.5 92.5,325.5 93.0,325.5 93.5,325.5 94.0,325.5 94.5,325.5 95.0,325.5 95.5,325.5 96.0,325.5 96.5,325.5 97.0,325.5 97.5,325.5 98.0,325.5 98.5,325.5 99.0,325.5 99.5,325.5 100.0,325.5 100.5,325.5 101.0,325.5 101.5,325.5 102.0,325.5 102.5,325.5 103.0,325.5 103.5,325.5 104.0,325.5 104.5,325.5 105.0,325.5 105.5,325.5 106.0,325.5 106.5,325.5 107.0,325.5 107.5,325.5 108.0,325.5 108.5,325.5 109.0,325.5 109.5,325.5 110.0,325.5 110.5,325.5 111.0,325.6 111.5,325.6 112.0,325.6 112.5,325.6 113.0,325.7 113.5,325.8 114.0,325.8 114.5,326.0 115.0,326.1 115.5,326.3 116.0,326.5 116.5,326.8 117.0,327.1 117.5,327.6 118.0,328.0 118.5,328.6 119.0,329.2 119.5,329.8 120.0,330.5 120.5,331.3 121.0,332.1 121.5,332.9 122.0,333.7 122.5,334.5 123.0,335.4 123.5,336.3 124.0,337.1 124.5,338.0 125.0,338.9 125.5,339.8 126.0,340.7 126.5,341.6 127.0,342.5 127.5,343.3 128.0,344.2 128.5,345.1 129.0,346.0 129.5,346.9 130.0,347.8 130.5,348.7 131.0,349.6 131.5,350.5 132.0,351.4 132.5,352.3 133.0,353.2 133.5,354.1 134.0,354.9 134.5,355.8 135.0,356.7 135.5,357.6 136.0,358.5 136.5,359.4 137.0,360.3 137.5,361.2 138.0,362.1 138.5,363.0 139.0,363.9 139.5,364.8 140.0,365.7 140.5,366.5 141.0,367.4 141.5,368.3 142.0,369.2 142.5,370.1 143.0,371.0 143.5,371.9 144.0,372.8 144.5,373.7 145.0,374.6 145.5,375.4 146.0,376.3 146.5,377.2 147.0,378.1 147.5,379.0 148.0,379.9 148.5,380.8 149.0,381.7 149.5,382.6 150.0,383.5 150.5,384.3 151.0,385.2 151.5,386.1 152.0,387.0 152.5,387.9 153.0,388.8 153.5,389.7 154.0,390.6 154.5,391.5 155.0,392.3 155.5,393.2 156.0,394.1 156.5,395.0 157.0,395.9 157.5,396.8 158.0,397.7 158.5,398.6 159.0,399.4 159.5,400.3 160.0,401.2 160.5,402.1 161.0,403.0 161.5,403.9 162.0,404.8 162.5,405.7 163.0,406.5 163.5,407.4 164.0,408.3 164.5,409.2 165.0,410.1 165.5,411.0 166.0,411.9 166.5,412.7 167.0,413.6 167.5,414.5 168.0,415.4 168.5,416.3 169.0,417.2 169.5,418.1 170.0,418.9 170.5,419.8 171.0,420.7 171.5,421.6 172.0,422.5 172.5,423.4 173.0,424.2 173.5,425.1 174.0,426.0 174.5,426.9 175.0,427.8 175.5,428.7 176.0,429.5 176.5,430.4 177.0,431.3 177.5,432.2 178.0,433.1 178.5,434.0 179.0,434.8 179.5,435.7 180.0,436.6 180.5,437.5 181.0,438.4 181.5,439.3 182.0,440.1 182.5,441.0 183.0,441.9 183.5,442.8 184.0,443.7 184.5,444.5 185.0,445.4 185.5,446.3 186.0,447.2 186.5,448.1 187.0,448.9 187.5,449.8 188.0,450.7 188.5,451.6 189.0,452.5 189.5,453.3 190.0,454.2 190.5,455.1 191.0,456.0 191.5,456.9 192.0,457.7 192.5,458.6 193.0,459.5 193.5,460.4 194.0,461.2 194.5,462.1 195.0,463.0 195.5,463.9 196.0,464.8 196.5,465.6 197.0,466.5 197.5,467.4 198.0,468.3 198.5,469.1 199.0,470.0 199.5,470.9 200.0,471.8 200.5,472.6 201.0,473.5 201.5,474.4 202.0,475.3 202.5,476.1 203.0,477.0 203.5,477.9 204.0,478.8 204.5,479.6 205.0,480.5 205.5,481.4 206.0,482.3 206.5,483.1 207.0,484.0 207.5,484.9 208.0,485.8 208.5,486.6 209.0,487.5 209.5,488.4 210.0,489.3 210.5,490.1 211.0,491.0 211.5,491.9 212.0,492.7 212.5,493.6 213.0,494.5 213.5,495.4 214.0,496.2 214.5,497.1 215.0,498.0 215.5,498.8 216.0,499.7 216.5,500.6 217.0,501.4 217.5,502.3 218.0,503.2 218.5,504.1 219.0,504.9 219.5,505.8 220.0,506.7 220.5,507.5 221.0,508.4 221.5,509.3 222.0,510.1 222.5,511.0 223.0,511.9 223.5,512.7 224.0,513.6 224.5,514.5 225.0,515.3 225.5,516.2 226.0,517.1 226.5,517.9 227.0,518.8 227.5,519.7 228.0,520.5 228.5,521.4 229.0,522.3 229.5,523.1 230.0,524.0 230.5,524.8 231.0,525.7 231.5,526.6 232.0,527.4 232.5,528.3 233.0,529.2 233.5,530.0 234.0,530.9 234.5,531.8 235.0,532.6 235.5,533.5 236.0,534.3 236.5,535.2 237.0,536.1 237.5,536.9 238.0,537.8 238.5,538.6 239.0,539.5 239.5,540.4 240.0,541.2 240.5,542.1 241.0,542.9 241.5,543.8 242.0,544.7 242.5,545.5 243.0,546.4 243.5,547.2 244.0,548.1 244.5,548.9 245.0,549.8 245.5,550.7 246.0,551.5 246.5,552.4 247.0,553.2 247.5,554.1 248.0,554.9 248.5,555.8 249.0,556.6 249.5,557.5 250.0,558.4 250.5,559.2 251.0,560.1 251.5,560.9 252.0,561.8 252.5,562.6 253.0,563.5 253.5,564.3 254.0,565.2 254.5,566.0 255.0,566.9 255.5,567.7 256.0,568.6 256.5,569.4 257.0,570.3 257.5,571.1 258.0,572.0 258.5,572.8 259.0,573.7 259.5,574.5 260.0,575.4 260.5,576.2 261.0,577.1 261.5,577.9 262.0,578.8 262.5,579.6 263.0,580.5 263.5,581.3 264.0,582.1 264.5,583.0 265.0,583.8 265.5,584.7 266.0,585.5 266.5,586.4 267.0,587.2 267.5,588.1 268.0,588.9 268.5,589.7 269.0,590.6 269.5,591.4 270.0,592.3 270.5,593.1 271.0,593.9 271.5,594.8 272.0,595.6 272.5,596.5 273.0,597.3 273.5,598.1 274.0,599.0 274.5,599.8 275.0,600.7 275.5,601.5 276.0,602.3 276.5,603.2 277.0,604.0 277.5,604.8 278.0,605.7 278.5,606.5 279.0,607.3 279.5,608.2 280.0,609.0 280.5,609.8 281.0,610.7 281.5,611.5 282.0,612.3 282.5,613.2 283.0,614.0 283.5,614.8 284.0,615.7 284.5,616.5 285.0,617.3 285.5,618.1 286.0,619.0 286.5,619.8 287.0,620.6 287.5,621.5 288.0,622.3 288.5,623.1 289.0,623.9 289.5,624.8 290.0,625.6 290.5,626.4 291.0,627.2 291.5,628.1 292.0,628.9 292.5,629.7 293.0,630.5 293.5,631.4 294.0,632.2 294.5,633.0 295.0,633.8 295.5,634.6 296.0,635.5 296.5,636.3 297.0,637.1 297.5,637.9 298.0,638.7 298.5,639.5 299.0,640.4 299.5,641.2 300.0,642.0 300.5,642.8 301.0,643.6 301.5,644.4 302.0,645.2 302.5,646.1 303.0,646.9 303.5,647.7 304.0,648.5 304.5,649.3 305.0,650.1 305.5,650.9 306.0,651.7 306.5,652.5 307.0,653.3 307.5,654.1 308.0,655.0 308.5,655.8 309.0,656.6 309.5,657.4 310.0,658.2 310.5,659.0 311.0,659.8 311.5,660.6 312.0,661.4 312.5,662.2 313.0,663.0 313.5,663.8 314.0,664.6 314.5,665.4 315.0,666.2 315.5,667.0 316.0,667.8 316.5,668.6 317.0,669.4 317.5,670.2 318.0,671.0 318.5,671.7 319.0,672.5 319.5,673.3 320.0,674.1 320.5,674.9 321.0,675.7 321.5,676.5 322.0,677.3 322.5,678.1 323.0,678.8 323.5,679.6 324.0,680.4 324.5,681.2 325.0,682.0 325.5,682.8 326.0,683.6 326.5,684.3 327.0,685.1 327.5,685.9 328.0,686.7 328.5,687.5 329.0,688.2 329.5,689.0 330.0,689.8 330.5,690.6 331.0,691.3 331.5,692.1 332.0,692.9 332.5,693.7 333.0,694.4 333.5,695.2 334.0,696.0 334.5,696.7 335.0,697.5 335.5,698.3 336.0,699.0 336.5,699.8 337.0,700.6 337.5,701.3 338.0,702.1 338.5,702.9 339.0,703.6 339.5,704.4 340.0,705.1 340.5,705.9 341.0,706.6 341.5,707.4 342.0,708.2 342.5,708.9 343.0,709.7 343.5,710.4 344.0,711.2 344.5,711.9 345.0,712.7 345.5,713.4 346.0,714.2 346.5,714.9 347.0,715.7 347.5,716.4 348.0,717.1 348.5,717.9 349.0,718.6 349.5,719.4 350.0,720.1 350.5,720.8 351.0,721.6 351.5,722.3 352.0,723.1 352.5,723.8 353.0,724.5 353.5,725.2 354.0,726.0 354.5,726.7 355.0,727.4 355.5,728.2 356.0,728.9 356.5,729.6 357.0,730.3 357.5,731.1 358.0,731.8 358.5,732.5 359.0,733.2 359.5,733.9 360.0,734.6 360.5,735.4 361.0,736.1 361.5,736.8 362.0,737.5 362.5,738.2 363.0,738.9 363.5,739.6 364.0,740.3 364.5,741.0 365.0,741.7 365.5,742.4 366.0,743.1 366.5,743.8 367.0,744.5 367.5,745.2 368.0,745.9 368.5,746.6 369.0,747.3 369.5,748.0 370.0,748.7 370.5,749.4 371.0,750.1 371.5,750.7 372.0,751.4 372.5,752.1 373.0,752.8 373.5,753.5 374.0,754.1 374.5,754.8 375.0,755.5 375.5,756.2 376.0,756.8 376.5,757.5 377.0,758.2 377.5,758.8 378.0,759.5 378.5,760.2 379.0,760.8 379.5,761.5 380.0,762.1 380.5,762.8 381.0,763.4 381.5,764.1 382.0,764.7 382.5,765.4 383.0,766.0 383.5,766.7 384.0,767.3 384.5,768.0 385.0,768.6 385.5,769.2 386.0,769.9 386.5,770.5 387.0,771.1 387.5,771.8 388.0,772.4 388.5,773.0 389.0,773.6 389.5,774.3 390.0,774.9 390.5,775.5 391.0,776.1 391.5,776.7 392.0,777.3 392.5,777.9 393.0,778.6 393.5,779.2 394.0,779.8 394.5,780.4 395.0,781.0 395.5,781.6 396.0,782.2 396.5,782.7 397.0,783.3 397.5,783.9 398.0,784.5 398.5,785.1 399.0,785.7 399.5,786.2 400.0,786.8 400.5,787.4 401.0,788.0 401.5,788.5 402.0,789.1 402.5,789.7 403.0,790.2 403.5,790.8 404.0,791.3 404.5,791.9 405.0,792.4 405.5,793.0 406.0,793.5 406.5,794.1 407.0,794.6 407.5,795.2 408.0,795.7 408.5,796.2 409.0,796.8 409.5,797.3 410.0,797.8 410.5,798.3 411.0,798.9 411.5,799.4 412.0,799.9 412.5,800.4 413.0,800.9 413.5,801.4 414.0,801.9 414.5,802.4 415.0,802.9 415.5,803.4 416.0,803.9 416.5,804.4 417.0,804.9 417.5,805.3 418.0,805.8 418.5,806.3 419.0,806.8 419.5,807.2 420.0,807.7 420.5,808.2 421.0,808.6 421.5,809.1 422.0,809.5 422.5,810.0 423.0,810.4 423.5,810.9 424.0,811.3 424.5,811.7 425.0,812.2 425.5,812.6 426.0,813.0 426.5,813.5 427.0,813.9 427.5,814.3 428.0,814.7 428.5,815.1 429.0,815.5 429.5,815.9 430.0,816.3 430.5,816.7 431.0,817.1 431.5,817.5 432.0,817.9 432.5,818.3 433.0,818.6 433.5,819.0 434.0,819.4 434.5,819.7 435.0,820.1 435.5,820.4 436.0,820.8 436.5,821.2 437.0,821.5 437.5,821.8 438.0,822.2 438.5,822.5 439.0,822.8 439.5,823.2 440.0,823.5 440.5,823.8 441.0,824.1 441.5,824.4 442.0,824.7 442.5,825.0 443.0,825.3 443.5,825.6 444.0,825.9 444.5,826.2 445.0,826.5 445.5,826.7 446.0,827.0 446.5,827.3 447.0,827.5 447.5,827.8 448.0,828.1 448.5,828.3 449.0,828.5 449.5,828.8 450.0,829.0 450.5,829.3 451.0,829.5 451.5,829.7 452.0,829.9 452.5,830.1 453.0,830.3 453.5,830.5 454.0,830.7 454.5,830.9 455.0,831.1 455.5,831.3 456.0,831.5 456.5,831.7 457.0,831.9 457.5,832.0 458.0,832.2 458.5,832.3 459.0,832.5 459.5,832.6 460.0,832.8 460.5,832.9 461.0,833.1 461.5,833.2 462.0,833.3 462.5,833.4 463.0,833.6 463.5,833.7 464.0,833.8 464.5,833.9 465.0,834.0 465.5,834.1 466.0,834.1 466.5,834.2 467.0,834.3 467.5,834.4 468.0,834.4 468.5,834.5 469.0,834.6 469.5,834.6 470.0,834.7 470.5,834.7 471.0,834.7 471.5,834.8 472.0,834.8 472.5,834.8 473.0,834.8 473.5,834.9 474.0,834.9 474.5,834.9 475.0,834.9 475.5,834.9 476.0,834.8 476.5,834.8 477.0,834.8 477.5,834.8 478.0,834.8 478.5,834.7 479.0,834.7 479.5,834.6 480.0,834.6 480.5,834.5 481.0,834.5 481.5,834.4 482.0,834.3 482.5,834.3 483.0,834.2 483.5,834.1 484.0,834.0 484.5,833.9 485.0,833.8 485.5,833.7 486.0,833.6 486.5,833.5 487.0,833.4 487.5,833.2 488.0,833.1 488.5,833.0 489.0,832.8 489.5,832.7 490.0,832.6 490.5,832.4 491.0,832.2 491.5,832.1 492.0,831.9 492.5,831.7 493.0,831.6 493.5,831.4 494.0,831.2 494.5,831.0 495.0,830.8 495.5,830.6 496.0,830.4 496.5,830.2 497.0,830.0 497.5,829.8 498.0,829.6 498.5,829.3 499.0,829.1 499.5,828.9 500.0,828.6 500.5,828.4 501.0,828.2 501.5,827.9 502.0,827.6 502.5,827.4 503.0,827.1 503.5,826.8 504.0,826.6 504.5,826.3 505.0,826.0 505.5,825.7 506.0,825.4 506.5,825.1 507.0,824.8 507.5,824.5 508.0,824.2 508.5,823.9 509.0,823.6 509.5,823.3 510.0,823.0 510.5,822.6 511.0,822.3 511.5,822.0 512.0,821.6 512.5,821.3 513.0,820.9 513.5,820.6 514.0,820.2 514.5,819.9 515.0,819.5 515.5,819.1 516.0,818.8 516.5,818.4 517.0,818.0 517.5,817.6 518.0,817.3 518.5,816.9 519.0,816.5 519.5,816.1 520.0,815.7 520.5,815.3 521.0,814.9 521.5,814.5 522.0,814.0 522.5,813.6 523.0,813.2 523.5,812.8 524.0,812.4 524.5,811.9 525.0,811.5 525.5,811.0 526.0,810.6 526.5,810.2 527.0,809.7 527.5,809.3 528.0,808.8 528.5,808.4 529.0,807.9 529.5,807.4 530.0,807.0 530.5,806.5 531.0,806.0 531.5,805.5 532.0,805.1 532.5,804.6 533.0,804.1 533.5,803.6 534.0,803.1 534.5,802.6 535.0,802.1 535.5,801.6 536.0,801.1 536.5,800.6 537.0,800.1 537.5,799.6 538.0,799.1 538.5,798.5 539.0,798.0 539.5,797.5 540.0,797.0 540.5,796.4 541.0,795.9 541.5,795.4 542.0,794.8 542.5,794.3 543.0,793.8 543.5,793.2 544.0,792.7 544.5,792.1 545.0,791.6 545.5,791.0 546.0,790.5 546.5,789.9 547.0,789.3 547.5,788.8 548.0,788.2 548.5,787.6 549.0,787.1 549.5,786.5 550.0,785.9 550.5,785.3 551.0,784.7 551.5,784.2 552.0,783.6 552.5,783.0 553.0,782.4 553.5,781.8 554.0,781.2 554.5,780.6 555.0,780.0 555.5,779.4 556.0,778.8 556.5,778.2 557.0,777.6 557.5,777.0 558.0,776.4 558.5,775.7 559.0,775.1 559.5,774.5 560.0,773.9 560.5,773.3 561.0,772.6 561.5,772.0 562.0,771.4 562.5,770.8 563.0,770.1 563.5,769.5 564.0,768.9 564.5,768.2 565.0,767.6 565.5,766.9 566.0,766.3 566.5,765.6 567.0,765.0 567.5,764.3 568.0,763.7 568.5,763.0 569.0,762.4 569.5,761.7 570.0,761.1 570.5,760.4 571.0,759.8 571.5,759.1 572.0,758.4 572.5,757.8 573.0,757.1 573.5,756.4 574.0,755.8 574.5,755.1 575.0,754.4 575.5,753.7 576.0,753.1 576.5,752.4 577.0,751.7 577.5,751.0 578.0,750.3 578.5,749.6 579.0,749.0 579.5,748.3 580.0,747.6 580.5,746.9 581.0,746.2 581.5,745.5 582.0,744.8 582.5,744.1 583.0,743.4 583.5,742.7 584.0,742.0 584.5,741.3 585.0,740.6 585.5,739.9 586.0,739.2 586.5,738.5 587.0,737.8 587.5,737.1 588.0,736.4 588.5,735.6 589.0,734.9 589.5,734.2 590.0,733.5 590.5,732.8 591.0,732.1 591.5,731.3 592.0,730.6 592.5,729.9 593.0,729.2 593.5,728.5 594.0,727.7 594.5,727.0 595.0,726.3 595.5,725.5 596.0,724.8 596.5,724.1 597.0,723.3 597.5,722.6 598.0,721.9 598.5,721.1 599.0,720.4 599.5,719.7 600.0,718.9 600.5,718.2 601.0,717.4 601.5,716.7 602.0,716.0 602.5,715.2 603.0,714.5 603.5,713.7 604.0,713.0 604.5,712.2 605.0,711.5 605.5,710.7 606.0,710.0 606.5,709.2 607.0,708.5 607.5,707.7 608.0,706.9 608.5,706.2 609.0,705.4 609.5,704.7 610.0,703.9 610.5,703.2 611.0,702.4 611.5,701.6 612.0,700.9 612.5,700.1 613.0,699.3 613.5,698.6 614.0,697.8 614.5,697.0 615.0,696.3 615.5,695.5 616.0,694.7 616.5,694.0 617.0,693.2 617.5,692.4 618.0,691.6 618.5,690.9 619.0,690.1 619.5,689.3 620.0,688.5 620.5,687.8 621.0,687.0 621.5,686.2 622.0,685.4 622.5,684.6 623.0,683.9 623.5,683.1 624.0,682.3 624.5,681.5 625.0,680.7 625.5,679.9 626.0,679.2 626.5,678.4 627.0,677.6 627.5,676.8 628.0,676.0 628.5,675.2 629.0,674.4 629.5,673.6 630.0,672.9 630.5,672.1 631.0,671.3 631.5,670.5 632.0,669.7 632.5,668.9 633.0,668.1 633.5,667.3 634.0,666.5 634.5,665.7 635.0,664.9 635.5,664.1 636.0,663.3 636.5,662.5 637.0,661.7 637.5,660.9 638.0,660.1 638.5,659.3 639.0,658.5 639.5,657.7 640.0,656.9 640.5,656.1 641.0,655.3 641.5,654.5 642.0,653.7 642.5,652.9 643.0,652.0 643.5,651.2 644.0,650.4 644.5,649.6 645.0,648.8 645.5,648.0 646.0,647.2 646.5,646.4 647.0,645.6 647.5,644.8 648.0,643.9 648.5,643.1 649.0,642.3 649.5,641.5 650.0,640.7 650.5,639.9 651.0,639.1 651.5,638.2 652.0,637.4 652.5,636.6 653.0,635.8 653.5,635.0 654.0,634.1 654.5,633.3 655.0,632.5 655.5,631.7 656.0,630.9 656.5,630.0 657.0,629.2 657.5,628.4 658.0,627.6 658.5,626.7 659.0,625.9 659.5,625.1 660.0,624.3 660.5,623.4 661.0,622.6 661.5,621.8 662.0,621.0 662.5,620.1 663.0,619.3 663.5,618.5 664.0,617.7 664.5,616.8 665.0,616.0 665.5,615.2 666.0,614.3 666.5,613.5 667.0,612.7 667.5,611.8 668.0,611.0 668.5,610.2 669.0,609.3 669.5,608.5 670.0,607.7 670.5,606.8 671.0,606.0 671.5,605.2 672.0,604.3 672.5,603.5 673.0,602.7 673.5,601.8 674.0,601.0 674.5,600.2 675.0,599.3 675.5,598.5 676.0,597.6 676.5,596.8 677.0,596.0 677.5,595.1 678.0,594.3 678.5,593.4 679.0,592.6 679.5,591.8 680.0,590.9 680.5,590.1 681.0,589.2 681.5,588.4 682.0,587.5 682.5,586.7 683.0,585.9 683.5,585.0 684.0,584.2 684.5,583.3 685.0,582.5 685.5,581.6 686.0,580.8 686.5,579.9 687.0,579.1 687.5,578.3 688.0,577.4 688.5,576.6 689.0,575.7 689.5,574.9 690.0,574.0 690.5,573.2 691.0,572.3 691.5,571.5 692.0,570.6 692.5,569.8 693.0,568.9 693.5,568.1 694.0,567.2 694.5,566.4 695.0,565.5 695.5,564.7 696.0,563.8 696.5,563.0 697.0,562.1 697.5,561.3 698.0,560.4 698.5,559.5 699.0,558.7 699.5,557.8 700.0,557.0 700.5,556.1 701.0,555.3 701.5,554.4 702.0,553.6 702.5,552.7 703.0,551.9 703.5,551.0 704.0,550.1 704.5,549.3 705.0,548.4 705.5,547.6 706.0,546.7 706.5,545.9 707.0,545.0 707.5,544.1 708.0,543.3 708.5,542.4 709.0,541.6 709.5,540.7 710.0,539.8 710.5,539.0 711.0,538.1 711.5,537.3 712.0,536.4 712.5,535.5 713.0,534.7 713.5,533.8 714.0,533.0 714.5,532.1 715.0,531.2 715.5,530.4 716.0,529.5 716.5,528.6 717.0,527.8 717.5,526.9 718.0,526.1 718.5,525.2 719.0,524.3 719.5,523.5 720.0,522.6 720.5,521.7 721.0,520.9 721.5,520.0 722.0,519.1 722.5,518.3 723.0,517.4 723.5,516.5 724.0,515.7 724.5,514.8 725.0,513.9 725.5,513.1 726.0,512.2 726.5,511.3 727.0,510.5 727.5,509.6 728.0,508.7 728.5,507.9 729.0,507.0 729.5,506.1 730.0,505.3 730.5,504.4 731.0,503.5 731.5,502.7 732.0,501.8 732.5,500.9 733.0,500.1 733.5,499.2 734.0,498.3 734.5,497.4 735.0,496.6 735.5,495.7 736.0,494.8 736.5,494.0 737.0,493.1 737.5,492.2 738.0,491.3 738.5,490.5 739.0,489.6 739.5,488.7 740.0,487.9 740.5,487.0 741.0,486.1 741.5,485.2 742.0,484.4 742.5,483.5 743.0,482.6 743.5,481.7 744.0,480.9 744.5,480.0 745.0,479.1 745.5,478.2 746.0,477.4 746.5,476.5 747.0,475.6 747.5,474.7 748.0,473.9 748.5,473.0 749.0,472.1 749.5,471.2 750.0,470.4 750.5,469.5 751.0,468.6 751.5,467.7 752.0,466.9 752.5,466.0 753.0,465.1 753.5,464.2 754.0,463.4 754.5,462.5 755.0,461.6 755.5,460.7 756.0,459.8 756.5,459.0 757.0,458.1 757.5,457.2 758.0,456.3 758.5,455.4 759.0,454.6 759.5,453.7 760.0,452.8 760.5,451.9 761.0,451.1 761.5,450.2 762.0,449.3 762.5,448.4 763.0,447.5 763.5,446.7 764.0,445.8 764.5,444.9 765.0,444.0 765.5,443.1 766.0,442.2 766.5,441.4 767.0,440.5 767.5,439.6 768.0,438.7 768.5,437.8 769.0,437.0 769.5,436.1 770.0,435.2 770.5,434.3 771.0,433.4 771.5,432.5 772.0,431.7 772.5,430.8 773.0,429.9 773.5,429.0 774.0,428.1 774.5,427.3 775.0,426.4 775.5,425.5 776.0,424.6 776.5,423.7 777.0,422.8 777.5,421.9 778.0,421.1 778.5,420.2 779.0,419.3 779.5,418.4 780.0,417.5 780.5,416.6 781.0,415.8 781.5,414.9 782.0,414.0 782.5,413.1 783.0,412.2 783.5,411.3 784.0,410.4 784.5,409.6 785.0,408.7 785.5,407.8 786.0,406.9 786.5,406.0 787.0,405.1 787.5,404.2 788.0,403.4 788.5,402.5 789.0,401.6 789.5,400.7 790.0,399.8 790.5,398.9 791.0,398.0 791.5,397.1 792.0,396.3 792.5,395.4 793.0,394.5 793.5,393.6 794.0,392.7 794.5,391.8 795.0,390.9 795.5,390.0 796.0,389.1 796.5,388.3 797.0,387.4 797.5,386.5 798.0,385.6 798.5,384.7 799.0,383.8 799.5,382.9 800.0,382.0 800.5,381.1 801.0,380.3 801.5,379.4 802.0,378.5 802.5,377.6 803.0,376.7 803.5,375.8 804.0,374.9 804.5,374.0 805.0,373.1 805.5,372.2 806.0,371.4 806.5,370.5 807.0,369.6 807.5,368.7 808.0,367.8 808.5,366.9 809.0,366.0 809.5,365.1 810.0,364.2 810.5,363.3 811.0,362.4 811.5,361.5 812.0,360.7 812.5,359.8 813.0,358.9 813.5,358.0 814.0,357.1 814.5,356.2 815.0,355.3 815.5,354.4 816.0,353.5 816.5,352.6 817.0,351.7 817.5,350.8 818.0,349.9 818.5,349.1 819.0,348.2 819.5,347.3 820.0,346.4 820.5,345.5 821.0,344.6 821.5,343.7 822.0,342.8 822.5,341.9 823.0,341.0 823.5,340.1 824.0,339.3 824.5,338.4 825.0,337.5 825.5,336.6 826.0,335.7 826.5,334.9 827.0,334.0 827.5,333.2 828.0,332.4 828.5,331.6 829.0,330.8 829.5,330.1 830.0,329.4 830.5,328.8 831.0,328.2 831.5,327.7 832.0,327.3 832.5,326.9 833.0,326.6 833.5,326.4 834.0,326.2 834.5,326.0 835.0,325.9 835.5,325.8 836.0,325.7 836.5,325.7 837.0,325.6 837.5,325.6 838.0,325.6 838.5,325.6 839.0,325.5 839.5,325.5 840.0,325.5 840.5,325.5 841.0,325.5 841.5,325.5 842.0,325.5 842.5,325.5 843.0,325.5 843.5,325.5 844.0,325.5 844.5,325.5 845.0,325.5 845.5,325.5 846.0,325.5 846.5,325.5 847.0,325.5 847.5,325.5 848.0,325.5 848.5,325.5 849.0,325.5 849.5,325.5 850.0,325.5 850.5,325.5 851.0,325.5 851.5,325.5 852.0,325.5 852.5,325.5 853.0,325.5 853.5,325.5 854.0,325.5 854.5,325.5 855.0,325.5 855.5,325.5 856.0,325.5 856.5,325.5 857.0,325.5 857.5,325.5 858.0,325.5 858.5,325.5 859.0,325.5 859.5,325.5 860.0,325.5 860.5,325.5 861.0,325.5 861.5,325.5 862.0,325.5 862.5,325.5 863.0,325.5 863.5,325.5 864.0,325.5 864.5,325.5 865.0,325.5 865.5,325.5 866.0,325.5 866.5,325.5 867.0,325.5 867.5,325.5 868.0,325.5 868.5,325.5 869.0,325.5 869.5,325.5 870.0,325.5 870.5,325.5 871.0,325.5 871.5,325.5 872.0,325.5 872.5,325.5" fill="none" stroke="#0fb2ef" stroke-width="2"/>
<polyline points="76.5,325.5 77.0,325.5 77.5,325.5 78.0,325.5 78.5,325.5 79.0,325.5 79.5,325.5 80.0,325.5 80.5,325.5 81.0,325.5 81.5,325.5 82.0,325.5 82.5,325.5 83.0,325.5 83.5,325.5 84.0,325.5 84.5,325.5 85.0,325.5 85.5,325.5 86.0,325.5 86.5,325.5 87.0,325.5 87.5,325.6 88.0,325.6 88.5,325.6 89.0,325.6 89.5,325.7 90.0,325.7 90.5,325.8 91.0,325.9 91.5,326.0 92.0,326.1 92.5,326.3 93.0,326.5 93.5,326.8 94.0,327.1 94.5,327.5 95.0,327.9 95.5,328.4 96.0,329.0 96.5,329.6 97.0,330.3 97.5,331.0 98.0,331.7 98.5,332.5 99.0,333.2 99.5,334.0 100.0,334.8 100.5,335.7 101.0,336.5 101.5,337.3 102.0,338.2 102.5,339.0 103.0,339.8 103.5,340.7 104.0,341.5 104.5,342.4 105.0,343.2 105.5,344.1 106.0,344.9 106.5,345.8 107.0,346.7 107.5,347.5 108.0,348.4 108.5,349.2 109.0,350.1 109.5,350.9 110.0,351.8 110.5,352.6 111.0,353.5 111.5,354.3 112.0,355.2 112.5,356.0 113.0,356.9 113.5,357.7 114.0,358.6 114.5,359.4 115.0,360.3 115.5,361.1 116.0,362.0 116.5,362.8 117.0,363.7 117.5,364.5 118.0,365.4 118.5,366.2 119.0,367.1 119.5,367.9 120.0,368.8 120.5,369.6 121.0,370.5 121.5,371.3 122.0,372.2 122.5,373.1 123.0,373.9 123.5,374.8 124.0,375.6 124.5,376.5 125.0,377.3 125.5,378.2 126.0,379.0 126.5,379.9 127.0,380.7 127.5,381.6 128.0,382.4 128.5,383.3 129.0,384.1 129.5,385.0 130.0,385.8 130.5,386.7 131.0,387.5 131.5,388.4 132.0,389.2 132.5,390.0 133.0,390.9 133.5,391.7 134.0,392.6 134.5,393.4 135.0,394.3 135.5,395.1 136.0,396.0 136.5,396.8 137.0,397.7 137.5,398.5 138.0,399.4 138.5,400.2 139.0,401.1 139.5,401.9 140.0,402.8 140.5,403.6 141.0,404.5 141.5,405.3 142.0,406.2 142.5,407.0 143.0,407.9 143.5,408.7 144.0,409.6 144.5,410.4 145.0,411.3 145.5,412.1 146.0,412.9 146.5,413.8 147.0,414.6 147.5,415.5 148.0,416.3 148.5,417.2 149.0,418.0 149.5,418.9 150.0,419.7 150.5,420.6 151.0,421.4 151.5,422.3 152.0,423.1 152.5,423.9 153.0,424.8 153.5,425.6 154.0,426.5 154.5,427.3 155.0,428.2 155.5,429.0 156.0,429.9 156.5,430.7 157.0,431.6 157.5,432.4 158.0,433.2 158.5,434.1 159.0,434.9 159.5,435.8 160.0,436.6 160.5,437.5 161.0,438.3 161.5,439.2 162.0,440.0 162.5,440.8 163.0,441.7 163.5,442.5 164.0,443.4 164.5,444.2 165.0,445.1 165.5,445.9 166.0,446.8 166.5,447.6 167.0,448.4 167.5,449.3 168.0,450.1 168.5,451.0 169.0,451.8 169.5,452.7 170.0,453.5 170.5,454.3 171.0,455.2 171.5,456.0 172.0,456.9 172.5,457.7 173.0,458.5 173.5,459.4 174.0,460.2 174.5,461.1 175.0,461.9 175.5,462.8 176.0,463.6 176.5,464.4 177.0,465.3 177.5,466.1 178.0,467.0 178.5,467.8 179.0,468.6 179.5,469.5 180.0,470.3 180.5,471.2 181.0,472.0 181.5,472.8 182.0,473.7 182.5,474.5 183.0,475.4 183.5,476.2 184.0,477.0 184.5,477.9 185.0,478.7 185.5,479.6 186.0,480.4 186.5,481.2 187.0,482.1 187.5,482.9 188.0,483.7 188.5,484.6 189.0,485.4 189.5,486.3 190.0,487.1 190.5,487.9 191.0,488.8 191.5,489.6 192.0,490.4 192.5,491.3 193.0,492.1 193.5,493.0 194.0,493.8 194.5,494.6 195.0,495.5 195.5,496.3 196.0,497.1 196.5,498.0 197.0,498.8 197.5,499.6 198.0,500.5 198.5,501.3 199.0,502.2 199.5,503.0 200.0,503.8 200.5,504.7 201.0,505.5 201.5,506.3 202.0,507.2 202.5,508.0 203.0,508.8 203.5,509.7 204.0,510.5 204.5,511.3 205.0,512.2 205.5,513.0 206.0,513.8 206.5,514.7 207.0,515.5 207.5,516.3 208.0,517.2 208.5,518.0 209.0,518.8 209.5,519.7 210.0,520.5 210.5,521.3 211.0,522.2 211.5,523.0 212.0,523.8 212.5,524.7 213.0,525.5 213.5,526.3 214.0,527.1 214.5,528.0 215.0,528.8 215.5,529.6 216.0,530.5 216.5,531.3 217.0,532.1 217.5,533.0 218.0,533.8 218.5,534.6 219.0,535.4 219.5,536.3 220.0,537.1 220.5,537.9 221.0,538.8 221.5,539.6 222.0,540.4 222.5,541.2 223.0,542.1 223.5,542.9 224.0,543.7 224.5,544.6 225.0,545.4 225.5,546.2 226.0,547.0 226.5,547.9 227.0,548.7 227.5,549.5 228.0,550.3 228.5,551.2 229.0,552.0 229.5,552.8 230.0,553.6 230.5,554.5 231.0,555.3 231.5,556.1 232.0,556.9 232.5,557.8 233.0,558.6 233.5,559.4 234.0,560.2 234.5,561.1 235.0,561.9 235.5,562.7 236.0,563.5 236.5,564.3 237.0,565.2 237.5,566.0 238.0,566.8 238.5,567.6 239.0,568.5 239.5,569.3 240.0,570.1 240.5,570.9 241.0,571.7 241.5,572.6 242.0,573.4 242.5,574.2 243.0,575.0 243.5,575.8 244.0,576.7 244.5,577.5 245.0,578.3 245.5,579.1 246.0,579.9 246.5,580.8 247.0,581.6 247.5,582.4 248.0,583.2 248.5,584.0 249.0,584.8 249.5,585.7 250.0,586.5 250.5,587.3 251.0,588.1 251.5,588.9 252.0,589.7 252.5,590.5 253.0,591.4 253.5,592.2 254.0,593.0 254.5,593.8 255.0,594.6 255.5,595.4 256.0,596.2 256.5,597.1 257.0,597.9 257.5,598.7 258.0,599.5 258.5,600.3 259.0,601.1 259.5,601.9 260.0,602.7 260.5,603.6 261.0,604.4 261.5,605.2 262.0,606.0 262.5,606.8 263.0,607.6 263.5,608.4 264.0,609.2 264.5,610.0 265.0,610.8 265.5,611.7 266.0,612.5 266.5,613.3 267.0,614.1 267.5,614.9 268.0,615.7 268.5,616.5 269.0,617.3 269.5,618.1 270.0,618.9 270.5,619.7 271.0,620.5 271.5,621.3 272.0,622.1 272.5,622.9 273.0,623.7 273.5,624.5 274.0,625.3 274.5,626.2 275.0,627.0 275.5,627.8 276.0,628.6 276.5,629.4 277.0,630.2 277.5,631.0 278.0,631.8 278.5,632.6 279.0,633.4 279.5,634.2 280.0,635.0 280.5,635.8 281.0,636.6 281.5,637.4 282.0,638.2 282.5,638.9 283.0,639.7 283.5,640.5 284.0,641.3 284.5,642.1 285.0,642.9 285.5,643.7 286.0,644.5 286.5,645.3 287.0,646.1 287.5,646.9 288.0,647.7 288.5,648.5 289.0,649.3 289.5,650.1 290.0,650.9 290.5,651.7 291.0,652.4 291.5,653.2 292.0,654.0 292.5,654.8 293.0,655.6 293.5,656.4 294.0,657.2 294.5,658.0 295.0,658.8 295.5,659.5 296.0,660.3 296.5,661.1 297.0,661.9 297.5,662.7 298.0,663.5 298.5,664.3 299.0,665.0 299.5,665.8 300.0,666.6 300.5,667.4 301.0,668.2 301.5,669.0 302.0,669.7 302.5,670.5 303.0,671.3 303.5,672.1 304.0,672.9 304.5,673.6 305.0,674.4 305.5,675.2 306.0,676.0 306.5,676.7 307.0,677.5 307.5,678.3 308.0,679.1 308.5,679.8 309.0,680.6 309.5,681.4 310.0,682.2 310.5,682.9 311.0,683.7 311.5,684.5 312.0,685.3 312.5,686.0 313.0,686.8 313.5,687.6 314.0,688.3 314.5,689.1 315.0,689.9 315.5,690.6 316.0,691.4 316.5,692.2 317.0,692.9 317.5,693.7 318.0,694.5 318.5,695.2 319.0,696.0 319.5,696.8 320.0,697.5 320.5,698.3 321.0,699.0 321.5,699.8 322.0,700.6 322.5,701.3 323.0,702.1 323.5,702.8 324.0,703.6 324.5,704.4 325.0,705.1 325.5,705.9 326.0,706.6 326.5,707.4 327.0,708.1 327.5,708.9 328.0,709.6 328.5,710.4 329.0,711.1 329.5,711.9 330.0,712.6 330.5,713.4 331.0,714.1 331.5,714.9 332.0,715.6 332.5,716.4 333.0,717.1 333.5,717.9 334.0,718.6 334.5,719.3 335.0,720.1 335.5,720.8 336.0,721.6 336.5,722.3 337.0,723.0 337.5,723.8 338.0,724.5 338.5,725.3 339.0,726.0 339.5,726.7 340.0,727.5 340.5,728.2 341.0,728.9 341.5,729.7 342.0,730.4 342.5,731.1 343.0,731.9 343.5,732.6 344.0,733.3 344.5,734.0 345.0,734.8 345.5,735.5 346.0,736.2 346.5,736.9 347.0,737.7 347.5,738.4 348.0,739.1 348.5,739.8 349.0,740.5 349.5,741.3 350.0,742.0 350.5,742.7 351.0,743.4 351.5,744.1 352.0,744.8 352.5,745.5 353.0,746.2 353.5,747.0 354.0,747.7 354.5,748.4 355.0,749.1 355.5,749.8 356.0,750.5 356.5,751.2 357.0,751.9 357.5,752.6 358.0,753.3 358.5,754.0 359.0,754.7 359.5,755.4 360.0,756.1 360.5,756.8 361.0,757.5 361.5,758.2 362.0,758.9 362.5,759.6 363.0,760.2 363.5,760.9 364.0,761.6 364.5,762.3 365.0,763.0 365.5,763.7 366.0,764.3 366.5,765.0 367.0,765.7 367.5,766.4 368.0,767.1 368.5,767.7 369.0,768.4 369.5,769.1 370.0,769.8 370.5,770.4 371.0,771.1 371.5,771.8 372.0,772.4 372.5,773.1 373.0,773.8 373.5,774.4 374.0,775.1 374.5,775.7 375.0,776.4 375.5,777.1 376.0,777.7 376.5,778.4 377.0,779.0 377.5,779.7 378.0,780.3 378.5,781.0 379.0,781.6 379.5,782.2 380.0,782.9 380.5,783.5 381.0,784.2 381.5,784.8 382.0,785.4 382.5,786.1 383.0,786.7 383.5,787.3 384.0,788.0 384.5,788.6 385.0,789.2 385.5,789.9 386.0,790.5 386.5,791.1 387.0,791.7 387.5,792.3 388.0,792.9 388.5,793.6 389.0,794.2 389.5,794.8 390.0,795.4 390.5,796.0 391.0,796.6 391.5,797.2 392.0,797.8 392.5,798.4 393.0,799.0 393.5,799.6 394.0,800.2 394.5,800.8 395.0,801.4 395.5,802.0 396.0,802.5 396.5,803.1 397.0,803.7 397.5,804.3 398.0,804.9 398.5,805.4 399.0,806.0 399.5,806.6 400.0,807.1 400.5,807.7 401.0,808.3 401.5,808.8 402.0,809.4 402.5,810.0 403.0,810.5 403.5,811.1 404.0,811.6 404.5,812.2 405.0,812.7 405.5,813.2 406.0,813.8 406.5,814.3 407.0,814.9 407.5,815.4 408.0,815.9 408.5,816.4 409.0,817.0 409.5,817.5 410.0,818.0 410.5,818.5 411.0,819.0 411.5,819.6 412.0,820.1 412.5,820.6 413.0,821.1 413.5,821.6 414.0,822.1 414.5,822.6 415.0,823.1 415.5,823.6 416.0,824.0 416.5,824.5 417.0,825.0 417.5,825.5 418.0,826.0 418.5,826.4 419.0,826.9 419.5,827.4 420.0,827.8 420.5,828.3 421.0,828.8 421.5,829.2 422.0,829.7 422.5,830.1 423.0,830.6 423.5,831.0 424.0,831.4 424.5,831.9 425.0,832.3 425.5,832.7 426.0,833.2 426.5,833.6 427.0,834.0 427.5,834.4 428.0,834.8 428.5,835.2 429.0,835.6 429.5,836.0 430.0,836.4 430.5,836.8 431.0,837.2 431.5,837.6 432.0,838.0 432.5,838.4 433.0,838.8 433.5,839.1 434.0,839.5 434.5,839.9 435.0,840.2 435.5,840.6 436.0,840.9 436.5,841.3 437.0,841.6 437.5,842.0 438.0,842.3 438.5,842.6 439.0,843.0 439.5,843.3 440.0,843.6 440.5,843.9 441.0,844.3 441.5,844.6 442.0,844.9 442.5,845.2 443.0,845.5 443.5,845.8 444.0,846.1 444.5,846.3 445.0,846.6 445.5,846.9 446.0,847.2 446.5,847.4 447.0,847.7 447.5,848.0 448.0,848.2 448.5,848.5 449.0,848.7 449.5,849.0 450.0,849.2 450.5,849.4 451.0,849.7 451.5,849.9 452.0,850.1 452.5,850.3 453.0,850.5 453.5,850.7 454.0,850.9 454.5,851.1 455.0,851.3 455.5,851.5 456.0,851.7 456.5,851.9 457.0,852.1 457.5,852.2 458.0,852.4 458.5,852.6 459.0,852.7 459.5,852.9 460.0,853.0 460.5,853.2 461.0,853.3 461.5,853.4 462.0,853.5 462.5,853.7 463.0,853.8 463.5,853.9 464.0,854.0 464.5,854.1 465.0,854.2 465.5,854.3 466.0,854.4 466.5,854.5 467.0,854.5 467.5,854.6 468.0,854.7 468.5,854.7 469.0,854.8 469.5,854.9 470.0,854.9 470.5,855.0 471.0,855.0 471.5,855.0 472.0,855.1 472.5,855.1 473.0,855.1 473.5,855.1 474.0,855.1 474.5,855.1 475.0,855.1 475.5,855.1 476.0,855.1 476.5,855.1 477.0,855.1 477.5,855.0 478.0,855.0 478.5,855.0 479.0,854.9 479.5,854.9 480.0,854.8 480.5,854.8 481.0,854.7 481.5,854.6 482.0,854.6 482.5,854.5 483.0,854.4 483.5,854.3 484.0,854.2 484.5,854.1 485.0,854.0 485.5,853.9 486.0,853.8 486.5,853.7 487.0,853.6 487.5,853.5 488.0,853.3 488.5,853.2 489.0,853.1 489.5,852.9 490.0,852.8 490.5,852.6 491.0,852.5 491.5,852.3 492.0,852.1 492.5,852.0 493.0,851.8 493.5,851.6 494.0,851.4 494.5,851.2 495.0,851.0 495.5,850.8 496.0,850.6 496.5,850.4 497.0,850.2 497.5,850.0 498.0,849.8 498.5,849.5 499.0,849.3 499.5,849.1 500.0,848.8 500.5,848.6 501.0,848.3 501.5,848.1 502.0,847.8 502.5,847.6 503.0,847.3 503.5,847.0 504.0,846.7 504.5,846.5 505.0,846.2 505.5,845.9 506.0,845.6 506.5,845.3 507.0,845.0 507.5,844.7 508.0,844.4 508.5,844.1 509.0,843.8 509.5,843.4 510.0,843.1 510.5,842.8 511.0,842.4 511.5,842.1 512.0,841.8 512.5,841.4 513.0,841.1 513.5,840.7 514.0,840.4 514.5,840.0 515.0,839.6 515.5,839.3 516.0,838.9 516.5,838.5 517.0,838.1 517.5,837.8 518.0,837.4 518.5,837.0 519.0,836.6 519.5,836.2 520.0,835.8 520.5,835.4 521.0,835.0 521.5,834.6 522.0,834.2 522.5,833.7 523.0,833.3 523.5,832.9 524.0,832.5 524.5,832.0 525.0,831.6 525.5,831.2 526.0,830.7 526.5,830.3 527.0,829.8 527.5,829.4 528.0,828.9 528.5,828.5 529.0,828.0 529.5,827.6 530.0,827.1 530.5,826.6 531.0,826.2 531.5,825.7 532.0,825.2 532.5,824.7 533.0,824.2 533.5,823.8 534.0,823.3 534.5,822.8 535.0,822.3 535.5,821.8 536.0,821.3 536.5,820.8 537.0,820.3 537.5,819.8 538.0,819.3 538.5,818.7 539.0,818.2 539.5,817.7 540.0,817.2 540.5,816.7 541.0,816.1 541.5,815.6 542.0,815.1 542.5,814.5 543.0,814.0 543.5,813.5 544.0,812.9 544.5,812.4 545.0,811.8 545.5,811.3 546.0,810.7 546.5,810.2 547.0,809.6 547.5,809.1 548.0,808.5 548.5,807.9 549.0,807.4 549.5,806.8 550.0,806.2 550.5,805.7 551.0,805.1 551.5,804.5 552.0,803.9 552.5,803.4 553.0,802.8 553.5,802.2 554.0,801.6 554.5,801.0 555.0,800.4 555.5,799.8 556.0,799.2 556.5,798.6 557.0,798.0 557.5,797.4 558.0,796.8 558.5,796.2 559.0,795.6 559.5,795.0 560.0,794.4 560.5,793.8 561.0,793.2 561.5,792.6 562.0,792.0 562.5,791.3 563.0,790.7 563.5,790.1 564.0,789.5 564.5,788.9 565.0,788.2 565.5,787.6 566.0,787.0 566.5,786.3 567.0,785.7 567.5,785.1 568.0,784.4 568.5,783.8 569.0,783.1 569.5,782.5 570.0,781.9 570.5,781.2 571.0,780.6 571.5,779.9 572.0,779.3 572.5,778.6 573.0,778.0 573.5,777.3 574.0,776.7 574.5,776.0 575.0,775.3 575.5,774.7 576.0,774.0 576.5,773.4 577.0,772.7 577.5,772.0 578.0,771.4 578.5,770.7 579.0,770.0 579.5,769.4 580.0,768.7 580.5,768.0 581.0,767.3 581.5,766.7 582.0,766.0 582.5,765.3 583.0,764.6 583.5,763.9 584.0,763.3 584.5,762.6 585.0,761.9 585.5,761.2 586.0,760.5 586.5,759.8 587.0,759.1 587.5,758.4 588.0,757.8 588.5,757.1 589.0,756.4 589.5,755.7 590.0,755.0 590.5,754.3 591.0,753.6 591.5,752.9 592.0,752.2 592.5,751.5 593.0,750.8 593.5,750.1 594.0,749.4 594.5,748.7 595.0,748.0 595.5,747.2 596.0,746.5 596.5,745.8 597.0,745.1 597.5,744.4 598.0,743.7 598.5,743.0 599.0,742.3 599.5,741.5 600.0,740.8 600.5,740.1 601.0,739.4 601.5,738.7 602.0,737.9 602.5,737.2 603.0,736.5 603.5,735.8 604.0,735.1 604.5,734.3 605.0,733.6 605.5,732.9 606.0,732.1 606.5,731.4 607.0,730.7 607.5,730.0 608.0,729.2 608.5,728.5 609.0,727.8 609.5,727.0 610.0,726.3 610.5,725.6 611.0,724.8 611.5,724.1 612.0,723.3 612.5,722.6 613.0,721.9 613.5,721.1 614.0,720.4 614.5,719.6 615.0,718.9 615.5,718.2 616.0,717.4 616.5,716.7 617.0,715.9 617.5,715.2 618.0,714.4 618.5,713.7 619.0,712.9 619.5,712.2 620.0,711.4 620.5,710.7 621.0,709.9 621.5,709.2 622.0,708.4 622.5,707.7 623.0,706.9 623.5,706.2 624.0,705.4 624.5,704.7 625.0,703.9 625.5,703.1 626.0,702.4 626.5,701.6 627.0,700.9 627.5,700.1 628.0,699.4 628.5,698.6 629.0,697.8 629.5,697.1 630.0,696.3 630.5,695.5 631.0,694.8 631.5,694.0 632.0,693.2 632.5,692.5 633.0,691.7 633.5,691.0 634.0,690.2 634.5,689.4 635.0,688.6 635.5,687.9 636.0,687.1 636.5,686.3 637.0,685.6 637.5,684.8 638.0,684.0 638.5,683.3 639.0,682.5 639.5,681.7 640.0,680.9 640.5,680.2 641.0,679.4 641.5,678.6 642.0,677.8 642.5,677.1 643.0,676.3 643.5,675.5 644.0,674.7 644.5,673.9 645.0,673.2 645.5,672.4 646.0,671.6 646.5,670.8 647.0,670.0 647.5,669.3 648.0,668.5 648.5,667.7 649.0,666.9 649.5,666.1 650.0,665.4 650.5,664.6 651.0,663.8 651.5,663.0 652.0,662.2 652.5,661.4 653.0,660.6 653.5,659.9 654.0,659.1 654.5,658.3 655.0,657.5 655.5,656.7 656.0,655.9 656.5,655.1 657.0,654.3 657.5,653.6 658.0,652.8 658.5,652.0 659.0,651.2 659.5,650.4 660.0,649.6 660.5,648.8 661.0,648.0 661.5,647.2 662.0,646.4 662.5,645.6 663.0,644.8 663.5,644.0 664.0,643.2 664.5,642.5 665.0,641.7 665.5,640.9 666.0,640.1 666.5,639.3 667.0,638.5 667.5,637.7 668.0,636.9 668.5,636.1 669.0,635.3 669.5,634.5 670.0,633.7 670.5,632.9 671.0,632.1 671.5,631.3 672.0,630.5 672.5,629.7 673.0,628.9 673.5,628.1 674.0,627.3 674.5,626.5 675.0,625.7 675.5,624.9 676.0,624.1 676.5,623.3 677.0,622.5 677.5,621.7 678.0,620.8 678.5,620.0 679.0,619.2 679.5,618.4 680.0,617.6 680.5,616.8 681.0,616.0 681.5,615.2 682.0,614.4 682.5,613.6 683.0,612.8 683.5,612.0 684.0,611.2 684.5,610.4 685.0,609.6 685.5,608.7 686.0,607.9 686.5,607.1 687.0,606.3 687.5,605.5 688.0,604.7 688.5,603.9 689.0,603.1 689.5,602.3 690.0,601.4 690.5,600.6 691.0,599.8 691.5,599.0 692.0,598.2 692.5,597.4 693.0,596.6 693.5,595.8 694.0,594.9 694.5,594.1 695.0,593.3 695.5,592.5 696.0,591.7 696.5,590.9 697.0,590.1 697.5,589.2 698.0,588.4 698.5,587.6 699.0,586.8 699.5,586.0 700.0,585.2 700.5,584.3 701.0,583.5 701.5,582.7 702.0,581.9 702.5,581.1 703.0,580.3 703.5,579.4 704.0,578.6 704.5,577.8 705.0,577.0 705.5,576.2 706.0,575.3 706.5,574.5 707.0,573.7 707.5,572.9 708.0,572.1 708.5,571.2 709.0,570.4 709.5,569.6 710.0,568.8 710.5,568.0 711.0,567.1 711.5,566.3 712.0,565.5 712.5,564.7 713.0,563.9 713.5,563.0 714.0,562.2 714.5,561.4 715.0,560.6 715.5,559.7 716.0,558.9 716.5,558.1 717.0,557.3 717.5,556.4 718.0,555.6 718.5,554.8 719.0,554.0 719.5,553.1 720.0,552.3 720.5,551.5 721.0,550.7 721.5,549.8 722.0,549.0 722.5,548.2 723.0,547.4 723.5,546.5 724.0,545.7 724.5,544.9 725.0,544.1 725.5,543.2 726.0,542.4 726.5,541.6 727.0,540.7 727.5,539.9 728.0,539.1 728.5,538.3 729.0,537.4 729.5,536.6 730.0,535.8 730.5,534.9 731.0,534.1 731.5,533.3 732.0,532.5 732.5,531.6 733.0,530.8 733.5,530.0 734.0,529.1 734.5,528.3 735.0,527.5 735.5,526.6 736.0,525.8 736.5,525.0 737.0,524.2 737.5,523.3 738.0,522.5 738.5,521.7 739.0,520.8 739.5,520.0 740.0,519.2 740.5,518.3 741.0,517.5 741.5,516.7 742.0,515.8 742.5,515.0 743.0,514.2 743.5,513.3 744.0,512.5 744.5,511.7 745.0,510.8 745.5,510.0 746.0,509.2 746.5,508.3 747.0,507.5 747.5,506.7 748.0,505.8 748.5,505.0 749.0,504.2 749.5,503.3 750.0,502.5 750.5,501.7 751.0,500.8 751.5,500.0 752.0,499.1 752.5,498.3 753.0,497.5 753.5,496.6 754.0,495.8 754.5,495.0 755.0,494.1 755.5,493.3 756.0,492.5 756.5,491.6 757.0,490.8 757.5,489.9 758.0,489.1 758.5,488.3 759.0,487.4 759.5,486.6 760.0,485.8 760.5,484.9 761.0,484.1 761.5,483.2 762.0,482.4 762.5,481.6 763.0,480.7 763.5,479.9 764.0,479.0 764.5,478.2 765.0,477.4 765.5,476.5 766.0,475.7 766.5,474.9 767.0,474.0 767.5,473.2 768.0,472.3 768.5,471.5 769.0,470.7 769.5,469.8 770.0,469.0 770.5,468.1 771.0,467.3 771.5,466.5 772.0,465.6 772.5,464.8 773.0,463.9 773.5,463.1 774.0,462.2 774.5,461.4 775.0,460.6 775.5,459.7 776.0,458.9 776.5,458.0 777.0,457.2 777.5,456.4 778.0,455.5 778.5,454.7 779.0,453.8 779.5,453.0 780.0,452.1 780.5,451.3 781.0,450.5 781.5,449.6 782.0,448.8 782.5,447.9 783.0,447.1 783.5,446.2 784.0,445.4 784.5,444.6 785.0,443.7 785.5,442.9 786.0,442.0 786.5,441.2 787.0,440.3 787.5,439.5 788.0,438.7 788.5,437.8 789.0,437.0 789.5,436.1 790.0,435.3 790.5,434.4 791.0,433.6 791.5,432.7 792.0,431.9 792.5,431.1 793.0,430.2 793.5,429.4 794.0,428.5 794.5,427.7 795.0,426.8 795.5,426.0 796.0,425.1 796.5,424.3 797.0,423.4 797.5,422.6 798.0,421.8 798.5,420.9 799.0,420.1 799.5,419.2 800.0,418.4 800.5,417.5 801.0,416.7 801.5,415.8 802.0,415.0 802.5,414.1 803.0,413.3 803.5,412.4 804.0,411.6 804.5,410.7 805.0,409.9 805.5,409.0 806.0,408.2 806.5,407.4 807.0,406.5 807.5,405.7 808.0,404.8 808.5,404.0 809.0,403.1 809.5,402.3 810.0,401.4 810.5,400.6 811.0,399.7 811.5,398.9 812.0,398.0 812.5,397.2 813.0,396.3 813.5,395.5 814.0,394.6 814.5,393.8 815.0,392.9 815.5,392.1 816.0,391.2 816.5,390.4 817.0,389.5 817.5,388.7 818.0,387.8 818.5,387.0 819.0,386.1 819.5,385.3 820.0,384.4 820.5,383.6 821.0,382.7 821.5,381.9 822.0,381.0 822.5,380.2 823.0,379.3 823.5,378.5 824.0,377.6 824.5,376.8 825.0,375.9 825.5,375.1 826.0,374.2 826.5,373.4 827.0,372.5 827.5,371.7 828.0,370.8 828.5,370.0 829.0,369.1 829.5,368.3 830.0,367.4 830.5,366.6 831.0,365.7 831.5,364.9 832.0,364.0 832.5,363.2 833.0,362.3 833.5,361.5 834.0,360.6 834.5,359.8 835.0,358.9 835.5,358.1 836.0,357.2 836.5,356.4 837.0,355.5 837.5,354.7 838.0,353.8 838.5,353.0 839.0,352.1 839.5,351.3 840.0,350.4 840.5,349.5 841.0,348.7 841.5,347.8 842.0,347.0 842.5,346.1 843.0,345.3 843.5,344.4 844.0,343.6 844.5,342.7 845.0,341.9 845.5,341.0 846.0,340.2 846.5,339.3 847.0,338.5 847.5,337.7 848.0,336.8 848.5,336.0 849.0,335.2 849.5,334.4 850.0,333.6 850.5,332.8 851.0,332.0 851.5,331.3 852.0,330.5 852.5,329.9 853.0,329.2 853.5,328.7 854.0,328.1 854.5,327.7 855.0,327.2 855.5,326.9 856.0,326.6 856.5,326.4 857.0,326.2 857.5,326.0 858.0,325.9 858.5,325.8 859.0,325.7 859.5,325.7 860.0,325.6 860.5,325.6 861.0,325.6 861.5,325.6 862.0,325.5 862.5,325.5 863.0,325.5 863.5,325.5 864.0,325.5 864.5,325.5 865.0,325.5 865.5,325.5 866.0,325.5 866.5,325.5 867.0,325.5 867.5,325.5 868.0,325.5 868.5,325.5 869.0,325.5 869.5,325.5 870.0,325.5 870.5,325.5 871.0,325.5 871.5,325.5 872.0,325.5 872.5,325.5" fill="none" stroke="#ec1c24" stroke-width="2"/>
<circle cx="142.1" cy="407.5" r="4.3" fill="#ec1c24"/>
<circle cx="165.0" cy="444.9" r="4.3" fill="#ec1c24"/>
<circle cx="187.9" cy="480.9" r="4.3" fill="#ec1c24"/>
<circle cx="210.8" cy="521.4" r="4.3" fill="#ec1c24"/>
<circle cx="233.6" cy="561.8" r="4.3" fill="#ec1c24"/>
<circle cx="256.5" cy="598.4" r="4.3" fill="#ec1c24"/>
<circle cx="279.4" cy="636.8" r="4.3" fill="#ec1c24"/>
<circle cx="302.3" cy="673.9" r="4.3" fill="#ec1c24"/>
<circle cx="325.2" cy="708.4" r="4.3" fill="#ec1c24"/>
<circle cx="348.1" cy="741.5" r="4.3" fill="#ec1c24"/>
<circle cx="371.0" cy="769.4" r="4.3" fill="#ec1c24"/>
<circle cx="393.8" cy="797.0" r="4.3" fill="#ec1c24"/>
<circle cx="416.7" cy="815.6" r="4.3" fill="#ec1c24"/>
<circle cx="439.6" cy="831.8" r="4.3" fill="#ec1c24"/>
<circle cx="462.5" cy="840.6" r="4.3" fill="#ec1c24"/>
<circle cx="485.4" cy="840.6" r="4.3" fill="#ec1c24"/>
<circle cx="508.3" cy="835.6" r="4.3" fill="#ec1c24"/>
<circle cx="531.2" cy="824.4" r="4.3" fill="#ec1c24"/>
<circle cx="554.0" cy="803.3" r="4.3" fill="#ec1c24"/>
<circle cx="576.9" cy="775.0" r="4.3" fill="#ec1c24"/>
<circle cx="599.8" cy="741.6" r="4.3" fill="#ec1c24"/>
<circle cx="622.7" cy="707.8" r="4.3" fill="#ec1c24"/>
<circle cx="645.6" cy="670.7" r="4.3" fill="#ec1c24"/>
<circle cx="668.5" cy="635.5" r="4.3" fill="#ec1c24"/>
<circle cx="691.4" cy="599.9" r="4.3" fill="#ec1c24"/>
<circle cx="714.2" cy="560.9" r="4.3" fill="#ec1c24"/>
<circle cx="737.1" cy="519.9" r="4.3" fill="#ec1c24"/>
<circle cx="760.0" cy="483.0" r="4.3" fill="#ec1c24"/>
<circle cx="782.9" cy="441.6" r="4.3" fill="#ec1c24"/>
<circle cx="805.8" cy="400.9" r="4.3" fill="#ec1c24"/>
<circle cx="142.1" cy="373.0" r="4.3" fill="#0fb2ef"/>
<circle cx="165.0" cy="414.6" r="4.3" fill="#0fb2ef"/>
<circle cx="187.9" cy="452.1" r="4.3" fill="#0fb2ef"/>
<circle cx="210.8" cy="490.6" r="4.3" fill="#0fb2ef"/>
<circle cx="233.6" cy="531.7" r="4.3" fill="#0fb2ef"/>
<circle cx="256.5" cy="571.9" r="4.3" fill="#0fb2ef"/>
<circle cx="279.4" cy="609.7" r="4.3" fill="#0fb2ef"/>
<circle cx="302.3" cy="649.1" r="4.3" fill="#0fb2ef"/>
<circle cx="325.2" cy="686.9" r="4.3" fill="#0fb2ef"/>
<circle cx="348.1" cy="718.0" r="4.3" fill="#0fb2ef"/>
<circle cx="371.0" cy="748.0" r="4.3" fill="#0fb2ef"/>
<circle cx="393.8" cy="775.9" r="4.3" fill="#0fb2ef"/>
<circle cx="416.7" cy="798.7" r="4.3" fill="#0fb2ef"/>
<circle cx="439.6" cy="817.9" r="4.3" fill="#0fb2ef"/>
<circle cx="462.5" cy="830.5" r="4.3" fill="#0fb2ef"/>
<circle cx="485.4" cy="833.1" r="4.3" fill="#0fb2ef"/>
<circle cx="508.3" cy="825.7" r="4.3" fill="#0fb2ef"/>
<circle cx="531.2" cy="807.6" r="4.3" fill="#0fb2ef"/>
<circle cx="554.0" cy="782.5" r="4.3" fill="#0fb2ef"/>
<circle cx="576.9" cy="752.3" r="4.3" fill="#0fb2ef"/>
<circle cx="599.8" cy="717.6" r="4.3" fill="#0fb2ef"/>
<circle cx="622.7" cy="681.9" r="4.3" fill="#0fb2ef"/>
<circle cx="645.6" cy="646.7" r="4.3" fill="#0fb2ef"/>
<circle cx="668.5" cy="610.0" r="4.3" fill="#0fb2ef"/>
<circle cx="691.4" cy="571.9" r="4.3" fill="#0fb2ef"/>
<circle cx="714.2" cy="531.9" r="4.3" fill="#0fb2ef"/>
<circle cx="737.1" cy="491.4" r="4.3" fill="#0fb2ef"/>
<circle cx="760.0" cy="453.1" r="4.3" fill="#0fb2ef"/>
<circle cx="782.9" cy="410.8" r="4.3" fill="#0fb2ef"/>
<circle cx="805.8" cy="371.3" r="4.3" fill="#0fb2ef"/><rect x="747" y="250" width="201" height="50" fill="url(#tbBg)"/><path d="M761 256L781.5 294M781.5 256L761 294" stroke="#fff" stroke-width="8" stroke-linecap="round"/><rect x="786.5" y="250" width="8" height="50" fill="#ffff00"/><rect x="785.5" y="250" width="1.2" height="50" fill="#333"/><path d="M810 256L820.5 275L831 256M820.5 275V294" stroke="#fff" stroke-width="8" stroke-linecap="round" stroke-linejoin="round" fill="none"/><rect x="837.5" y="250" width="1.6" height="50" fill="#d0d8dc"/><rect x="839.1" y="250" width="5" height="50" fill="#050a0e"/><rect x="844.1" y="250" width="1.6" height="50" fill="#b8c4ca"/><rect x="887.5" y="250" width="1.6" height="50" fill="#d0d8dc"/><rect x="889.1" y="250" width="5" height="50" fill="#050a0e"/><rect x="894.1" y="250" width="1.6" height="50" fill="#b8c4ca"/><rect x="851" y="263.5" width="35" height="27.5" rx="2.5" fill="url(#tbCam)"/><path d="M859 264L862 258.5H876L879 264z" fill="#d8d8d8"/><rect x="851" y="273" width="35" height="2.5" fill="#0e3444"/><circle cx="873.5" cy="277" r="7.5" fill="#0a2a38"/><path d="M869.5 276Q870 272 873.5 271" stroke="#c8d8e0" stroke-width="1" fill="none"/><path d="M905.5 294L917 282.5" stroke="#cfcfcf" stroke-width="4.5" stroke-linecap="round"/><circle cx="928.7" cy="269.6" r="16" fill="url(#tbGlass)" stroke="#e8e4e0" stroke-width="3.2"/><path d="M915 269.6H942.4" stroke="#8ab8f0" stroke-width="0.8" opacity="0.7"/><rect x="1" y="925" width="947" height="8" fill="url(#gSplit)"/><path d="M456 928.5H493" stroke="#9aa0a8" stroke-width="1" stroke-dasharray="1 1.2"/><rect x="1" y="933" width="947" height="50" fill="url(#gBotBar)"/><path d="M589 959L612.5 947L636.7 959V983H589z" fill="#000"/><ellipse cx="612.5" cy="975" rx="21" ry="8.5" fill="#1a10d0"/><ellipse cx="612.5" cy="973" rx="12" ry="5.5" fill="#2098c8"/><path d="M600 975Q606 958 609.5 946Q612.5 941 615.5 946Q619 958 625 975Q612.5 980 600 975z" fill="url(#conePeak)"/><svg x="640" y="935" width="70" height="48" viewBox="640 935 70 48" overflow="hidden"><circle cx="673.7" cy="966.4" r="23.5" fill="#1a2838"/><circle cx="673.7" cy="966.4" r="22.5" fill="#3068c0"/><circle cx="673.7" cy="966.4" r="19.5" fill="#40b0d8"/><circle cx="673.7" cy="966.4" r="16.5" fill="#58c050"/><circle cx="673.7" cy="966.4" r="13.5" fill="#f0e020"/><circle cx="673.7" cy="966.4" r="10.5" fill="#f08020"/><circle cx="673.7" cy="966.4" r="8.5" fill="#e82030"/><circle cx="673.7" cy="966.4" r="4.5" fill="#c04098"/><circle cx="673.7" cy="966.4" r="2.0" fill="#f0e0f0"/></svg><rect x="711.7" y="943.9" width="45.4" height="39.1" fill="#000"/><path d="M722.0 944V983M730.5 944V983M739.3 944V983M748.7 944V983M712 953.3H757M712 962.2H757M712 971.0H757M712 980.0H757" stroke="#3a88a6" stroke-width="1.6"/><path d="M716 983C722 980 726 968 729 956C731 947 733 945.5 734.2 945.5C735.5 945.5 737.5 947 739.5 956C742.5 968 746.5 980 752.5 983" stroke="#fff" stroke-width="1.8" fill="none"/><rect x="773" y="943.9" width="45" height="39.1" fill="#000" stroke="#f4f4f4" stroke-width="0.8"/><svg x="773" y="944" width="45" height="39" viewBox="773 944 45 39" overflow="hidden"><circle cx="781.1" cy="952.0" r="3.6" fill="#18b4f0"/><circle cx="790.4" cy="955.3" r="3.6" fill="#18b4f0"/><circle cx="785.4" cy="964.7" r="3.6" fill="#18b4f0"/><circle cx="795.5" cy="967.5" r="3.6" fill="#18b4f0"/><circle cx="802.3" cy="973.5" r="3.6" fill="#18b4f0"/><circle cx="813.1" cy="973.3" r="3.6" fill="#18b4f0"/><circle cx="792.0" cy="979.0" r="3.6" fill="#18b4f0"/><circle cx="777.9" cy="981.5" r="3.6" fill="#18b4f0"/><circle cx="805.5" cy="957" r="3.6" fill="#f0f000"/></svg><rect x="826" y="933" width="62.9" height="50" fill="url(#m2Orange)"/><svg x="826" y="933" width="63" height="50" viewBox="826 933 63 50" overflow="hidden"><g transform="translate(833.0 953.5) scale(1.453)"><path d="M0 19V0H4.2L9.5 12.5L14.8 0H19V19H15.5V7.5L11.2 19H7.8L3.5 7.5V19z" fill="url(#m2Blue)"/><path d="M20.5 -4.1H29.3Q32.3 -4.1 32.3 -1V1.8Q32.3 5 29.3 5H24.2V6.8H32.3V10H20.5V5.2Q20.5 2 23.5 2H28.8V-0.9H20.5z" fill="url(#m2Blue)"/></g></svg><path d="M912 956.5L916 960L912 963.5M917.5 956.5L921.5 960L917.5 963.5" stroke="#6a6e74" stroke-width="2" fill="none"/><path d="M913.5 971.5h9l-4.5 5z" fill="#6a6e74"/><rect x="0" y="983" width="948" height="2" fill="#a9adb5"/></svg></div>
<div style="position:absolute;left:948px;top:210px;width:5px;height:775px;overflow:hidden"><svg width="5" height="775" viewBox="948 210 5 775"><rect x="948" y="210" width="5" height="775" fill="#d3d6dc"/><rect x="948" y="210" width="5" height="1" fill="#9da1a9"/><rect x="948" y="217" width="1" height="708" fill="#8e9299"/></svg></div>
<div style="position:absolute;left:953px;top:210px;width:967px;height:775px;overflow:hidden"><svg width="967" height="775" viewBox="953 210 967 775"><rect x="953" y="210" width="967" height="775" fill="#d3d6dd"/><rect x="953" y="210" width="967" height="1" fill="#9da1a9"/><rect x="953" y="213" width="967" height="1.5" fill="#70747c"/><rect x="953" y="213" width="1.8" height="772" fill="#6a6e76"/><rect x="954.5" y="214.5" width="965.5" height="38" fill="url(#gTabStrip)"/><path d="M967.5 226.5v12l-6-6z" fill="none" stroke="#8c9096" stroke-width="1.5"/><path d="M1900 226.5v12l6-6z" fill="none" stroke="#8c9096" stroke-width="1.5"/><path d="M978.5 252.5L1014.5 216.5H1387L1358 252.5z" fill="#07578a"/><path d="M977.8 252.5L1013.8 216.5" stroke="#f2f4f7" stroke-width="1.7"/><rect x="1107" y="216" width="2" height="37" fill="#b9c2cc"/><rect x="1205" y="216" width="2" height="37" fill="#b9c2cc"/><path d="M1527.5 252.5H1655.5V216.5H1527.5z" fill="#07578a"/><rect x="1655.5" y="216.5" width="1.5" height="36" fill="#b9c2cc"/><path d="M1359 252.5L1392 216.5H1527V252.5z" fill="url(#gTabSelC)"/><path d="M1358.3 252.5L1391.3 216.5" stroke="#f2f4f7" stroke-width="1.7"/><rect x="1020" y="230" width="24" height="19" fill="#f2e8cc"/><rect x="1027.5" y="237" width="8.5" height="12" fill="#a86a22"/><rect x="1021" y="220.5" width="3" height="6" fill="#d01020"/><path d="M1017 234L1031.3 222L1046.5 234" stroke="url(#houseRoof)" stroke-width="3.6" fill="none" stroke-linejoin="round"/><polygon points="1140.2,230.2 1140.0,232.5 1137.0,233.7 1136.2,235.2 1136.9,238.4 1135.1,239.8 1132.2,238.5 1130.5,239.0 1128.8,241.8 1126.5,241.5 1125.3,238.5 1123.8,237.7 1120.6,238.4 1119.2,236.6 1120.5,233.7 1120.0,232.0 1117.2,230.2 1117.5,228.0 1120.5,226.8 1121.3,225.3 1120.6,222.1 1122.4,220.7 1125.3,222.0 1127.0,221.5 1128.8,218.8 1131.0,219.0 1132.2,222.0 1133.7,222.8 1136.9,222.1 1138.3,223.9 1137.0,226.8 1137.5,228.5" fill="url(#gearG)"/><circle cx="1128.8" cy="230.2" r="2.8" fill="#000"/><polygon points="1147.1,243.0 1147.0,244.3 1145.3,244.9 1144.8,245.8 1145.2,247.6 1144.2,248.4 1142.5,247.7 1141.6,248.0 1140.6,249.5 1139.3,249.4 1138.7,247.7 1137.8,247.2 1136.0,247.6 1135.2,246.6 1135.9,244.9 1135.6,244.0 1134.1,243.0 1134.2,241.7 1135.9,241.1 1136.4,240.2 1136.0,238.4 1137.0,237.6 1138.7,238.3 1139.6,238.0 1140.6,236.5 1141.9,236.6 1142.5,238.3 1143.4,238.8 1145.2,238.4 1146.0,239.4 1145.3,241.1 1145.6,242.0" fill="url(#gearG)"/><circle cx="1140.6" cy="243.0" r="1.6" fill="#000"/><rect x="1213.75" y="226.0" width="29.25" height="6.8" rx="1.5" fill="url(#iDisc)"/><rect x="1213.75" y="233.8" width="29.25" height="6.8" rx="1.5" fill="url(#iDisc)"/><rect x="1213.75" y="241.6" width="29.25" height="6.8" rx="1.5" fill="url(#iDisc)"/><path d="M1222.5 216.5H1233.7V227.5H1240.5L1228 241L1215.5 227.5H1222.5z" fill="url(#iCyanArrow)"/><g transform="translate(1390.4 229.6) scale(1.016)"><path d="M0 19V0H4.2L9.5 12.5L14.8 0H19V19H15.5V7.5L11.2 19H7.8L3.5 7.5V19z" fill="url(#m2Silver)"/><path d="M20.5 -4.1H29.3Q32.3 -4.1 32.3 -1V1.8Q32.3 5 29.3 5H24.2V6.8H32.3V10H20.5V5.2Q20.5 2 23.5 2H28.8V-0.9H20.5z" fill="url(#m2Silver)"/></g><g transform="translate(1534.7 229.6) scale(1.016)"><path d="M0 19V0H4.2L9.5 12.5L14.8 0H19V19H15.5V7.5L11.2 19H7.8L3.5 7.5V19z" fill="url(#m2Silver)"/><path d="M20.5 -4.1H29.3Q32.3 -4.1 32.3 -1V1.8Q32.3 5 29.3 5H24.2V6.8H32.3V10H20.5V5.2Q20.5 2 23.5 2H28.8V-0.9H20.5z" fill="url(#m2Silver)"/></g><text x="1050.6" y="239.6" font-size="16.6" fill="#fff">Hom...</text><text x="1149.7" y="239.6" font-size="16.6" fill="#fff">Setup</text><text x="1251.0" y="239.6" font-size="16.6" fill="#fff">Data Acquisition</text><text x="1430.5" y="239.5" font-size="16.2" fill="#000" font-weight="bold">M2 Results</text><text x="1572.0" y="239.6" font-size="16.6" fill="#fff">M2 Setup</text><path d="M1107.5 216.5h8l-8 7z" fill="#c9d1d9"/><path d="M1205.5 216.5h8l-8 7z" fill="#c9d1d9"/><path d="M1388.0 216.5h8l-8 7z" fill="#c9d1d9"/><path d="M1527.5 216.5h8l-8 7z" fill="#c9d1d9"/><rect x="955" y="252.5" width="963" height="730" fill="url(#gCyanFrame)"/><rect x="959" y="256.6" width="954.7" height="721" fill="#dfe1e8"/><rect x="1888.5" y="256.6" width="25.2" height="695.4" fill="#f0f0f0"/><rect x="1889.3" y="283.4" width="23.5" height="63" fill="#cdcdcd"/><path d="M1896 276l5.5-5 5.5 5" fill="none" stroke="#606060" stroke-width="2.6"/><path d="M1896 936l5.5 5 5.5-5" fill="none" stroke="#606060" stroke-width="2.6"/><rect x="959" y="952" width="954.7" height="25.7" fill="#f0f0f0"/><rect x="985" y="953" width="86" height="23.5" fill="#cdcdcd"/><path d="M976 960l-5.5 5.5 5.5 5.5" fill="none" stroke="#606060" stroke-width="2.6"/><path d="M1872 960l5.5 5.5-5.5 5.5" fill="none" stroke="#606060" stroke-width="2.6"/></svg></div>
<div style="position:absolute;left:959px;top:257px;width:929px;height:695px;overflow:hidden"><svg width="929" height="695" viewBox="959 257 929 695"><path d="M987.0 295.5H979.5V933.5H1370.5V295.5H1134.5" fill="none" stroke="#ffffff" stroke-width="1"/><path d="M986.0 294.5H978.5V932.5H1369.5V294.5H1133.5" fill="none" stroke="#0b5687" stroke-width="1"/><text x="996.8" y="302.8" font-size="24" font-weight="bold" fill="url(#gLetter)">X</text><text x="1029.6" y="302.0" font-size="20" fill="#0b4f7f">Parameters</text><path d="M1003.0 327.5H996.5V547.5H1341.5V327.5H1115.0" fill="none" stroke="#ffffff" stroke-width="1"/><path d="M1002.0 326.5H995.5V546.5H1340.5V326.5H1114.0" fill="none" stroke="#0b5687" stroke-width="1"/><text x="1006.5" y="333.7" font-size="19.3" fill="#0b4f7f">Before Lens</text><path d="M1003.0 564.5H996.5V784.5H1341.5V564.5H1099.0" fill="none" stroke="#ffffff" stroke-width="1"/><path d="M1002.0 563.5H995.5V783.5H1340.5V563.5H1098.0" fill="none" stroke="#0b5687" stroke-width="1"/><text x="1006.5" y="570.5" font-size="19.3" fill="#0b4f7f">After Lens</text><path d="M1004.0 805.5H996.5V922.5H1341.5V805.5H1042.0" fill="none" stroke="#ffffff" stroke-width="1"/><path d="M1003.0 804.5H995.5V921.5H1340.5V804.5H1041.0" fill="none" stroke="#0b5687" stroke-width="1"/><g transform="translate(1005.8 796.0) scale(1.000)"><path d="M0 19V0H4.2L9.5 12.5L14.8 0H19V19H15.5V7.5L11.2 19H7.8L3.5 7.5V19z" fill="url(#gLetter)"/><path d="M20.5 -4.1H29.3Q32.3 -4.1 32.3 -1V1.8Q32.3 5 29.3 5H24.2V6.8H32.3V10H20.5V5.2Q20.5 2 23.5 2H28.8V-0.9H20.5z" fill="url(#gLetter)"/></g><text x="1020.3" y="381.8" font-size="20" fill="#000">z0:</text><text x="1094.4" y="381.8" font-size="20" fill="#000">2244.03</text><text x="1201.2" y="381.8" font-size="20" fill="#000">mm</text><text x="1020.3" y="618.8" font-size="20" fill="#000">z0:</text><text x="1094.4" y="618.8" font-size="20" fill="#000">328.06</text><text x="1201.2" y="618.8" font-size="20" fill="#000">mm</text><text x="1020.3" y="426.8" font-size="20" fill="#000">d0:</text><text x="1094.4" y="426.8" font-size="20" fill="#000">1126.38</text><text x="1201.2" y="426.8" font-size="20" fill="#000">µm</text><text x="1020.3" y="663.8" font-size="20" fill="#000">d0:</text><text x="1094.4" y="663.8" font-size="20" fill="#000">135.33</text><text x="1201.2" y="663.8" font-size="20" fill="#000">µm</text><text x="1020.3" y="471.8" font-size="20" fill="#000">ZR:</text><text x="1094.4" y="471.8" font-size="20" fill="#000">1567.07</text><text x="1201.2" y="471.8" font-size="20" fill="#000">mm</text><text x="1020.3" y="708.8" font-size="20" fill="#000">ZR:</text><text x="1094.4" y="708.8" font-size="20" fill="#000">22.62</text><text x="1201.2" y="708.8" font-size="20" fill="#000">mm</text><text x="1020.3" y="516.8" font-size="20" fill="#000">Div:</text><text x="1094.4" y="516.8" font-size="20" fill="#000">0.72</text><text x="1201.2" y="516.8" font-size="20" fill="#000">mrad</text><text x="1020.3" y="753.8" font-size="20" fill="#000">Div:</text><text x="1094.4" y="753.8" font-size="20" fill="#000">5.98</text><text x="1201.2" y="753.8" font-size="20" fill="#000">mrad</text><text x="1029.5" y="858.5" font-size="20" fill="#000" font-weight="bold" textLength="37" lengthAdjust="spacingAndGlyphs">M2:</text><text x="1095.5" y="858.5" font-size="20" fill="#000" font-weight="bold" textLength="43" lengthAdjust="spacingAndGlyphs">1.20</text><text x="1028.5" y="904.0" font-size="20" fill="#000" textLength="39.5" lengthAdjust="spacingAndGlyphs">BPP:</text><text x="1094.4" y="904.0" font-size="20" fill="#000">0.20</text><text x="1201.2" y="904.0" font-size="20" fill="#000" textLength="89.5" lengthAdjust="spacingAndGlyphs">mrad*mm</text><path d="M1422.0 295.5H1414.5V933.5H1808.5V295.5H1569.5" fill="none" stroke="#ffffff" stroke-width="1"/><path d="M1421.0 294.5H1413.5V932.5H1807.5V294.5H1568.5" fill="none" stroke="#0b5687" stroke-width="1"/><text x="1431.8" y="302.8" font-size="24" font-weight="bold" fill="url(#gLetter)">Y</text><text x="1464.6" y="302.0" font-size="20" fill="#0b4f7f">Parameters</text><path d="M1437.0 327.5H1430.5V547.5H1775.5V327.5H1549.0" fill="none" stroke="#ffffff" stroke-width="1"/><path d="M1436.0 326.5H1429.5V546.5H1774.5V326.5H1548.0" fill="none" stroke="#0b5687" stroke-width="1"/><text x="1440.5" y="333.7" font-size="19.3" fill="#0b4f7f">Before Lens</text><path d="M1437.0 564.5H1430.5V784.5H1775.5V564.5H1533.0" fill="none" stroke="#ffffff" stroke-width="1"/><path d="M1436.0 563.5H1429.5V783.5H1774.5V563.5H1532.0" fill="none" stroke="#0b5687" stroke-width="1"/><text x="1440.5" y="570.5" font-size="19.3" fill="#0b4f7f">After Lens</text><path d="M1441.0 805.5H1433.5V922.5H1775.5V805.5H1479.0" fill="none" stroke="#ffffff" stroke-width="1"/><path d="M1440.0 804.5H1432.5V921.5H1774.5V804.5H1478.0" fill="none" stroke="#0b5687" stroke-width="1"/><g transform="translate(1442.8 796.0) scale(1.000)"><path d="M0 19V0H4.2L9.5 12.5L14.8 0H19V19H15.5V7.5L11.2 19H7.8L3.5 7.5V19z" fill="url(#gLetter)"/><path d="M20.5 -4.1H29.3Q32.3 -4.1 32.3 -1V1.8Q32.3 5 29.3 5H24.2V6.8H32.3V10H20.5V5.2Q20.5 2 23.5 2H28.8V-0.9H20.5z" fill="url(#gLetter)"/></g><text x="1456.5" y="381.8" font-size="20" fill="#000">z0:</text><text x="1528.5" y="381.8" font-size="20" fill="#000">2356.23</text><text x="1635.9" y="381.8" font-size="20" fill="#000">mm</text><text x="1456.5" y="618.8" font-size="20" fill="#000">z0:</text><text x="1528.5" y="618.8" font-size="20" fill="#000">327.99</text><text x="1635.9" y="618.8" font-size="20" fill="#000">mm</text><text x="1456.5" y="426.8" font-size="20" fill="#000">d0:</text><text x="1528.5" y="426.8" font-size="20" fill="#000">1025.52</text><text x="1635.9" y="426.8" font-size="20" fill="#000">µm</text><text x="1456.5" y="663.8" font-size="20" fill="#000">d0:</text><text x="1528.5" y="663.8" font-size="20" fill="#000">119.64</text><text x="1635.9" y="663.8" font-size="20" fill="#000">µm</text><text x="1456.5" y="471.8" font-size="20" fill="#000">ZR:</text><text x="1528.5" y="471.8" font-size="20" fill="#000">1544.07</text><text x="1635.9" y="471.8" font-size="20" fill="#000">mm</text><text x="1456.5" y="708.8" font-size="20" fill="#000">ZR:</text><text x="1528.5" y="708.8" font-size="20" fill="#000">21.02</text><text x="1635.9" y="708.8" font-size="20" fill="#000">mm</text><text x="1456.5" y="516.8" font-size="20" fill="#000">Div:</text><text x="1528.5" y="516.8" font-size="20" fill="#000">0.66</text><text x="1635.9" y="516.8" font-size="20" fill="#000">mrad</text><text x="1456.5" y="753.8" font-size="20" fill="#000">Div:</text><text x="1528.5" y="753.8" font-size="20" fill="#000">5.69</text><text x="1635.9" y="753.8" font-size="20" fill="#000">mrad</text><text x="1458.5" y="858.5" font-size="20" fill="#000" font-weight="bold" textLength="37" lengthAdjust="spacingAndGlyphs">M2:</text><text x="1529.6" y="858.5" font-size="20" fill="#000" font-weight="bold" textLength="43" lengthAdjust="spacingAndGlyphs">1.01</text><text x="1457.5" y="904.0" font-size="20" fill="#000" textLength="39.5" lengthAdjust="spacingAndGlyphs">BPP:</text><text x="1528.5" y="904.0" font-size="20" fill="#000">0.17</text><text x="1635.9" y="904.0" font-size="20" fill="#000" textLength="89.5" lengthAdjust="spacingAndGlyphs">mrad*mm</text><path d="M1859.0 295.5H1851.5V933.5H1921.0V295.5H1941.0" fill="none" stroke="#ffffff" stroke-width="1"/><path d="M1858.0 294.5H1850.5V932.5H1920.0V294.5H1940.0" fill="none" stroke="#0b5687" stroke-width="1"/><text x="1861" y="302.8" font-size="24" font-weight="bold" fill="url(#gLetter)">XY</text><path d="M1874.0 327.5H1868.5V547.5H1921.0V327.5H1941.0" fill="none" stroke="#ffffff" stroke-width="1"/><path d="M1873.0 326.5H1867.5V546.5H1920.0V326.5H1940.0" fill="none" stroke="#0b5687" stroke-width="1"/><text x="1875.0" y="333.7" font-size="19.3" fill="#0b4f7f">B</text><path d="M1874.0 564.5H1868.5V784.5H1921.0V564.5H1941.0" fill="none" stroke="#ffffff" stroke-width="1"/><path d="M1873.0 563.5H1867.5V783.5H1920.0V563.5H1940.0" fill="none" stroke="#0b5687" stroke-width="1"/><text x="1877.0" y="570.5" font-size="19.3" fill="#0b4f7f">A</text><rect x="995.5" y="948.5" width="20" height="6" fill="#fff" stroke="#333"/></svg></div>
<div style="position:absolute;left:0px;top:985px;width:1920px;height:35px;overflow:hidden"><svg width="1920" height="35" viewBox="0 985 1920 35"><rect x="0" y="985" width="1920" height="35" fill="url(#gStatus)"/><rect x="1831" y="985" width="1" height="35" fill="#9aa0a8"/><rect x="1832" y="985" width="1" height="35" fill="#e6e8ec"/><text x="9.5" y="1007.8" font-size="16.4" fill="#2a3242">Displays</text><text x="1847.5" y="1007.8" font-size="16.4" fill="#2a3242" textLength="62.5" lengthAdjust="spacingAndGlyphs">Controls</text></svg></div>
<div style="position:absolute;left:0px;top:0px;width:70px;height:70px;overflow:hidden"><svg width="70" height="70" viewBox="0 0 70 70"><circle cx="33.5" cy="34.3" r="26.8" fill="url(#iOrbRing)" stroke="#8c8c8c" stroke-width="1.2"/><circle cx="33.5" cy="34.3" r="23.5" fill="url(#iOrbIn)"/><path d="M14 30.5L33 21L53 30.5V55H14z" fill="#000"/><ellipse cx="33.5" cy="44.5" rx="19" ry="9.5" fill="url(#iOrbBase)"/><path d="M17 45C25 44 27.5 37 29.5 27Q31 18 33.5 17Q36 18 37.5 27C39.5 37 42 44 50 45Q33.5 50 17 45z" fill="url(#iRainbow2)"/></svg></div>
</body></html>
